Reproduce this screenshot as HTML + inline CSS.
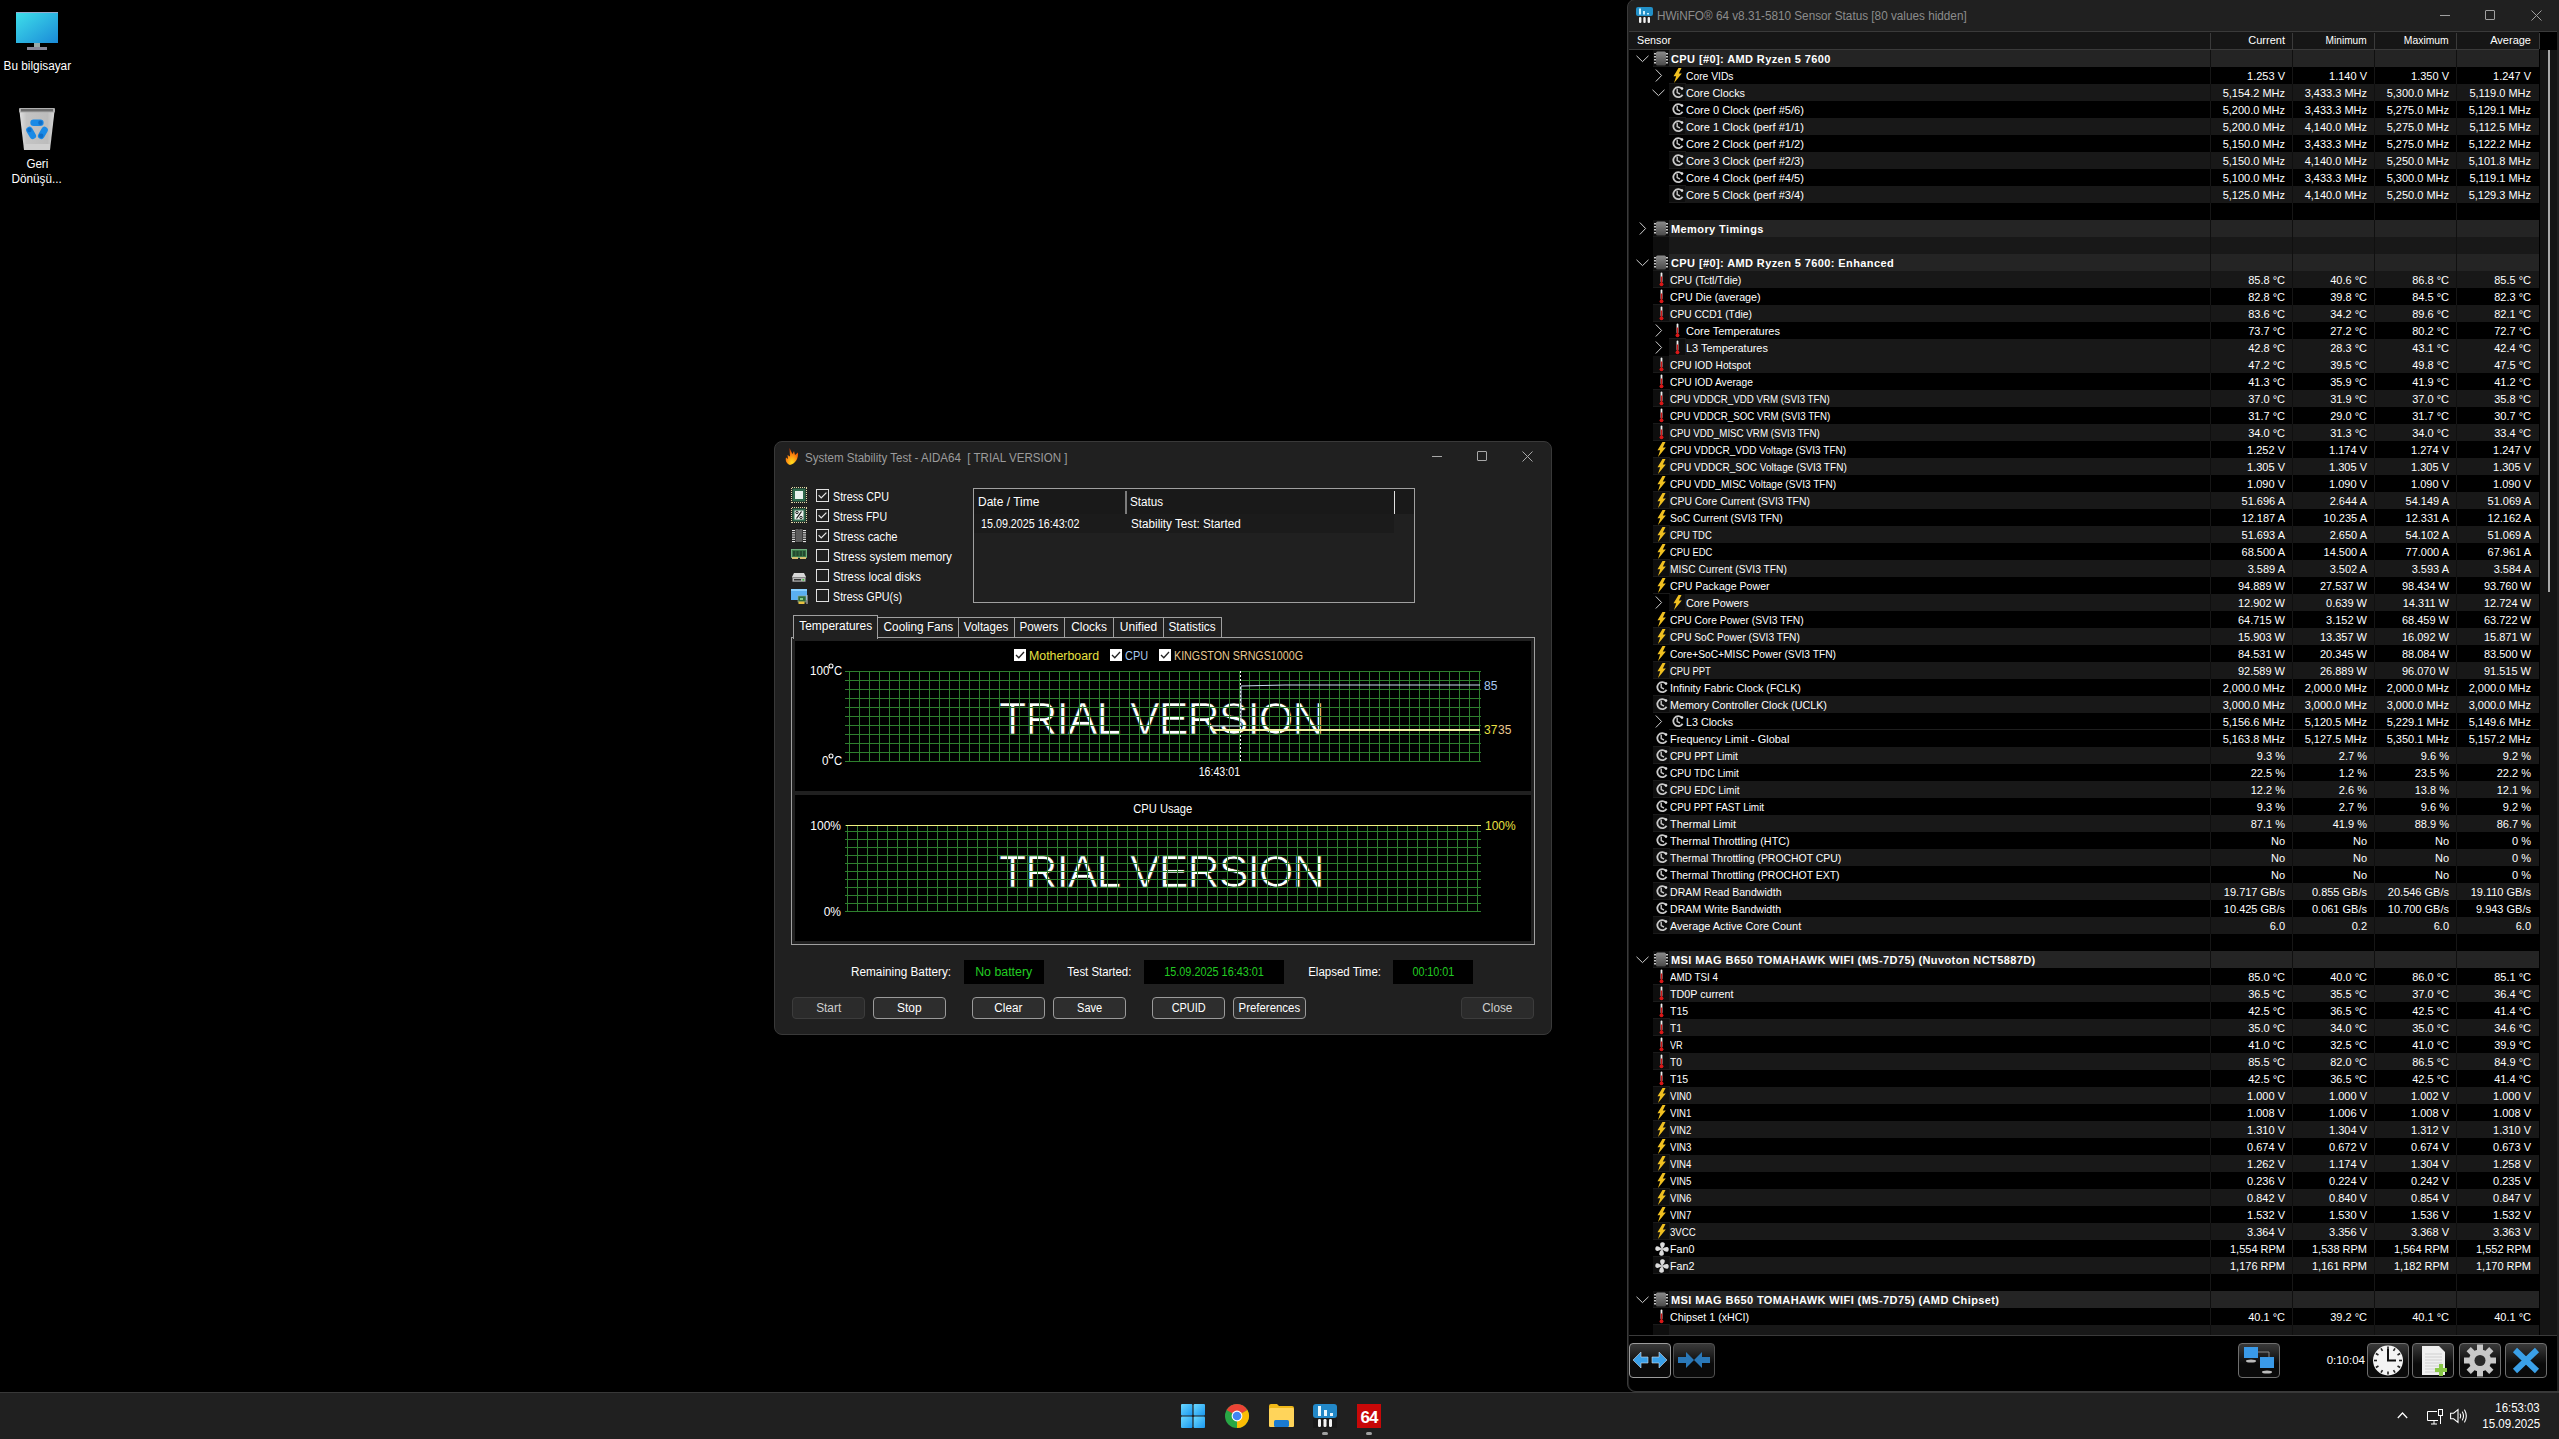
<!DOCTYPE html>
<html><head><meta charset="utf-8"><style>
html,body{margin:0;padding:0;background:#000;width:2559px;height:1439px;overflow:hidden;}
body{position:relative;font-family:"Liberation Sans", sans-serif;}
.t{position:absolute;white-space:pre;}
.r{position:absolute;}
svg{position:absolute;overflow:visible;}
</style></head><body>
<svg style="position:absolute;left:16px;top:12px;" width="42" height="39" viewBox="0 0 42 39"><defs><linearGradient id="mg" x1="0" y1="0" x2="1" y2="1"><stop offset="0" stop-color="#3fe0ea"/><stop offset="1" stop-color="#1a8ad8"/></linearGradient></defs><rect x="0" y="0" width="42" height="31" fill="url(#mg)"/><rect x="0" y="0" width="42" height="1" fill="#9ac"/><rect x="18" y="31" width="6" height="4" fill="#9aa"/><rect x="11" y="35" width="20" height="3" fill="#889"/></svg>
<div class="t" style="left:-3.0px;width:80px;text-align:center;top:59.84px;font-size:12px;line-height:12px;color:#fff;"><span style="display:inline-block;transform:scaleX(0.982);transform-origin:center">Bu bilgisayar</span></div>
<svg style="position:absolute;left:19px;top:108px;" width="36" height="42" viewBox="0 0 36 42"><defs><linearGradient id="rb" x1="0" y1="0" x2="1" y2="0"><stop offset="0" stop-color="#e0e0e0"/><stop offset="0.2" stop-color="#c4c4c4"/><stop offset="0.8" stop-color="#bcbcbc"/><stop offset="1" stop-color="#d8d8d8"/></linearGradient></defs><path d="M0.5 3.5 L35.5 3.5 L31 42 L5 42 Z" fill="url(#rb)"/><rect x="0" y="0" width="36" height="4.5" rx="1" fill="#b0b0b0"/><rect x="2" y="1" width="32" height="2.5" fill="#6c6c6c"/><rect x="5" y="36" width="26" height="6" fill="#cfcfcf"/><path d="M14.6 14.7 L21.4 14.7" stroke="#1a8ae6" stroke-width="6.5" stroke-linecap="round"/><circle cx="21.4" cy="14.7" r="2.2" fill="#0f6ec8"/><path d="M25.6 22.0 L22.2 27.8" stroke="#1a8ae6" stroke-width="6.5" stroke-linecap="round"/><circle cx="22.2" cy="27.8" r="2.2" fill="#0f6ec8"/><path d="M13.8 27.8 L10.4 22.0" stroke="#1a8ae6" stroke-width="6.5" stroke-linecap="round"/><circle cx="10.4" cy="22.0" r="2.2" fill="#0f6ec8"/></svg>
<div class="t" style="left:-3.0px;width:80px;text-align:center;top:157.84px;font-size:12px;line-height:12px;color:#fff;"><span style="display:inline-block;transform:scaleX(0.966);transform-origin:center">Geri</span></div>
<div class="t" style="left:-3.0px;width:80px;text-align:center;top:172.84px;font-size:12px;line-height:12px;color:#fff;"><span style="display:inline-block;transform:scaleX(0.979);transform-origin:center">Dönüşü...</span></div>
<div class="r" style="left:774px;top:441px;width:778px;height:594px;background:#202020;border:1px solid #393939;box-sizing:border-box;border-radius:8px;"></div>
<svg style="position:absolute;left:785px;top:448px;" width="14" height="17" viewBox="0 0 14 17"><defs><radialGradient id="fl" cx="0.5" cy="0.85" r="0.8"><stop offset="0" stop-color="#ffe020"/><stop offset="0.5" stop-color="#ff9010"/><stop offset="1" stop-color="#e04000"/></radialGradient></defs><path d="M4.5 0 L7.5 6 L9 3 L10 7 L13 4.5 C13.5 10 11 15.5 5 17 C2 16 0 13 1 9.5 L3 11 L2.5 7 L5 8.5 Z" fill="url(#fl)"/></svg>
<div class="t" style="left:805px;top:451.84px;font-size:12px;line-height:12px;color:#9c9c9c;"><span style="display:inline-block;transform:scaleX(0.963);transform-origin:left">System Stability Test - AIDA64&nbsp; [ TRIAL VERSION ]</span></div>
<div class="r" style="left:1432px;top:456px;width:10px;height:1px;background:#a8a8a8;"></div>
<div class="r" style="left:1477px;top:451px;width:10px;height:10px;background:transparent;border:1px solid #a8a8a8;box-sizing:border-box;border-radius:1px;"></div>
<svg style="position:absolute;left:1522px;top:451px;" width="11" height="11" viewBox="0 0 11 11"><path d="M0.5 0.5 L10.5 10.5 M10.5 0.5 L0.5 10.5" stroke="#a8a8a8" stroke-width="1"/></svg>
<div class="r" style="left:816px;top:489px;width:13px;height:13px;border:1px solid #e0e0e0;box-sizing:border-box;"></div>
<svg style="position:absolute;left:818px;top:492px;" width="9" height="7" viewBox="0 0 9 7"><path d="M0.6 3.2 L3.2 5.8 L8.4 0.6" fill="none" stroke="#e8e8e8" stroke-width="1.2"/></svg>
<div class="t" style="left:833px;top:490.84px;font-size:12px;line-height:12px;color:#fff;"><span style="display:inline-block;transform:scaleX(0.893);transform-origin:left">Stress CPU</span></div>
<div class="r" style="left:816px;top:509px;width:13px;height:13px;border:1px solid #e0e0e0;box-sizing:border-box;"></div>
<svg style="position:absolute;left:818px;top:512px;" width="9" height="7" viewBox="0 0 9 7"><path d="M0.6 3.2 L3.2 5.8 L8.4 0.6" fill="none" stroke="#e8e8e8" stroke-width="1.2"/></svg>
<div class="t" style="left:833px;top:510.84px;font-size:12px;line-height:12px;color:#fff;"><span style="display:inline-block;transform:scaleX(0.881);transform-origin:left">Stress FPU</span></div>
<div class="r" style="left:816px;top:529px;width:13px;height:13px;border:1px solid #e0e0e0;box-sizing:border-box;"></div>
<svg style="position:absolute;left:818px;top:532px;" width="9" height="7" viewBox="0 0 9 7"><path d="M0.6 3.2 L3.2 5.8 L8.4 0.6" fill="none" stroke="#e8e8e8" stroke-width="1.2"/></svg>
<div class="t" style="left:833px;top:530.84px;font-size:12px;line-height:12px;color:#fff;"><span style="display:inline-block;transform:scaleX(0.931);transform-origin:left">Stress cache</span></div>
<div class="r" style="left:816px;top:549px;width:13px;height:13px;border:1px solid #e0e0e0;box-sizing:border-box;"></div>
<div class="t" style="left:833px;top:550.84px;font-size:12px;line-height:12px;color:#fff;"><span style="display:inline-block;transform:scaleX(0.975);transform-origin:left">Stress system memory</span></div>
<div class="r" style="left:816px;top:569px;width:13px;height:13px;border:1px solid #e0e0e0;box-sizing:border-box;"></div>
<div class="t" style="left:833px;top:570.84px;font-size:12px;line-height:12px;color:#fff;"><span style="display:inline-block;transform:scaleX(0.949);transform-origin:left">Stress local disks</span></div>
<div class="r" style="left:816px;top:589px;width:13px;height:13px;border:1px solid #e0e0e0;box-sizing:border-box;"></div>
<div class="t" style="left:833px;top:590.84px;font-size:12px;line-height:12px;color:#fff;"><span style="display:inline-block;transform:scaleX(0.893);transform-origin:left">Stress GPU(s)</span></div>
<svg style="position:absolute;left:791px;top:487px;" width="16" height="16" viewBox="0 0 16 16"><rect x="1.5" y="1.5" width="13" height="13" fill="#2f6a4c"/><rect x="1" y="0" width="1" height="1" fill="#e0d8a8"/><rect x="1" y="15" width="1" height="1" fill="#e0d8a8"/><rect x="0" y="1" width="1" height="1" fill="#e0d8a8"/><rect x="15" y="1" width="1" height="1" fill="#e0d8a8"/><rect x="3" y="0" width="1" height="1" fill="#e0d8a8"/><rect x="3" y="15" width="1" height="1" fill="#e0d8a8"/><rect x="0" y="3" width="1" height="1" fill="#e0d8a8"/><rect x="15" y="3" width="1" height="1" fill="#e0d8a8"/><rect x="5" y="0" width="1" height="1" fill="#e0d8a8"/><rect x="5" y="15" width="1" height="1" fill="#e0d8a8"/><rect x="0" y="5" width="1" height="1" fill="#e0d8a8"/><rect x="15" y="5" width="1" height="1" fill="#e0d8a8"/><rect x="7" y="0" width="1" height="1" fill="#e0d8a8"/><rect x="7" y="15" width="1" height="1" fill="#e0d8a8"/><rect x="0" y="7" width="1" height="1" fill="#e0d8a8"/><rect x="15" y="7" width="1" height="1" fill="#e0d8a8"/><rect x="9" y="0" width="1" height="1" fill="#e0d8a8"/><rect x="9" y="15" width="1" height="1" fill="#e0d8a8"/><rect x="0" y="9" width="1" height="1" fill="#e0d8a8"/><rect x="15" y="9" width="1" height="1" fill="#e0d8a8"/><rect x="11" y="0" width="1" height="1" fill="#e0d8a8"/><rect x="11" y="15" width="1" height="1" fill="#e0d8a8"/><rect x="0" y="11" width="1" height="1" fill="#e0d8a8"/><rect x="15" y="11" width="1" height="1" fill="#e0d8a8"/><rect x="13" y="0" width="1" height="1" fill="#e0d8a8"/><rect x="13" y="15" width="1" height="1" fill="#e0d8a8"/><rect x="0" y="13" width="1" height="1" fill="#e0d8a8"/><rect x="15" y="13" width="1" height="1" fill="#e0d8a8"/><rect x="15" y="0" width="1" height="1" fill="#e0d8a8"/><rect x="15" y="15" width="1" height="1" fill="#e0d8a8"/><rect x="0" y="15" width="1" height="1" fill="#e0d8a8"/><rect x="15" y="15" width="1" height="1" fill="#e0d8a8"/><rect x="4" y="4" width="8" height="8" fill="#e8f2ee"/></svg>
<svg style="position:absolute;left:791px;top:507px;" width="16" height="16" viewBox="0 0 16 16"><rect x="1.5" y="1.5" width="13" height="13" fill="#2f6a4c"/><rect x="1" y="0" width="1" height="1" fill="#e0d8a8"/><rect x="1" y="15" width="1" height="1" fill="#e0d8a8"/><rect x="0" y="1" width="1" height="1" fill="#e0d8a8"/><rect x="15" y="1" width="1" height="1" fill="#e0d8a8"/><rect x="3" y="0" width="1" height="1" fill="#e0d8a8"/><rect x="3" y="15" width="1" height="1" fill="#e0d8a8"/><rect x="0" y="3" width="1" height="1" fill="#e0d8a8"/><rect x="15" y="3" width="1" height="1" fill="#e0d8a8"/><rect x="5" y="0" width="1" height="1" fill="#e0d8a8"/><rect x="5" y="15" width="1" height="1" fill="#e0d8a8"/><rect x="0" y="5" width="1" height="1" fill="#e0d8a8"/><rect x="15" y="5" width="1" height="1" fill="#e0d8a8"/><rect x="7" y="0" width="1" height="1" fill="#e0d8a8"/><rect x="7" y="15" width="1" height="1" fill="#e0d8a8"/><rect x="0" y="7" width="1" height="1" fill="#e0d8a8"/><rect x="15" y="7" width="1" height="1" fill="#e0d8a8"/><rect x="9" y="0" width="1" height="1" fill="#e0d8a8"/><rect x="9" y="15" width="1" height="1" fill="#e0d8a8"/><rect x="0" y="9" width="1" height="1" fill="#e0d8a8"/><rect x="15" y="9" width="1" height="1" fill="#e0d8a8"/><rect x="11" y="0" width="1" height="1" fill="#e0d8a8"/><rect x="11" y="15" width="1" height="1" fill="#e0d8a8"/><rect x="0" y="11" width="1" height="1" fill="#e0d8a8"/><rect x="15" y="11" width="1" height="1" fill="#e0d8a8"/><rect x="13" y="0" width="1" height="1" fill="#e0d8a8"/><rect x="13" y="15" width="1" height="1" fill="#e0d8a8"/><rect x="0" y="13" width="1" height="1" fill="#e0d8a8"/><rect x="15" y="13" width="1" height="1" fill="#e0d8a8"/><rect x="15" y="0" width="1" height="1" fill="#e0d8a8"/><rect x="15" y="15" width="1" height="1" fill="#e0d8a8"/><rect x="0" y="15" width="1" height="1" fill="#e0d8a8"/><rect x="15" y="15" width="1" height="1" fill="#e0d8a8"/><rect x="3.5" y="3.5" width="9" height="9" fill="#ecf0ee"/><path d="M10.5 4.5 L5.5 11.5" stroke="#111" stroke-width="1.2"/><circle cx="6" cy="5.5" r="1.2" fill="none" stroke="#111" stroke-width="0.9"/><circle cx="10" cy="10.5" r="1.2" fill="none" stroke="#111" stroke-width="0.9"/></svg>
<svg style="position:absolute;left:792px;top:528px;" width="14" height="15" viewBox="0 0 14 15"><path d="M3 0.5 H6 Q7 2 8 0.5 H11 V14.5 H3 Z" fill="#5c5c5c" stroke="#111" stroke-width="0.8"/><rect x="0" y="2.0" width="3" height="1.1" fill="#e8e8e8"/><rect x="11" y="2.0" width="3" height="1.1" fill="#e8e8e8"/><rect x="0" y="4.2" width="3" height="1.1" fill="#e8e8e8"/><rect x="11" y="4.2" width="3" height="1.1" fill="#e8e8e8"/><rect x="0" y="6.4" width="3" height="1.1" fill="#e8e8e8"/><rect x="11" y="6.4" width="3" height="1.1" fill="#e8e8e8"/><rect x="0" y="8.600000000000001" width="3" height="1.1" fill="#e8e8e8"/><rect x="11" y="8.600000000000001" width="3" height="1.1" fill="#e8e8e8"/><rect x="0" y="10.8" width="3" height="1.1" fill="#e8e8e8"/><rect x="11" y="10.8" width="3" height="1.1" fill="#e8e8e8"/><rect x="0" y="13.0" width="3" height="1.1" fill="#e8e8e8"/><rect x="11" y="13.0" width="3" height="1.1" fill="#e8e8e8"/></svg>
<svg style="position:absolute;left:791px;top:549px;" width="16" height="11" viewBox="0 0 16 11"><rect x="0" y="0" width="16" height="9" fill="#3d7a4a"/><rect x="0.5" y="0.5" width="15" height="8" fill="none" stroke="#7ab88a" stroke-width="0.8"/><rect x="2.0" y="2" width="2.4" height="5" fill="#244a30"/><rect x="5.3" y="2" width="2.4" height="5" fill="#244a30"/><rect x="8.6" y="2" width="2.4" height="5" fill="#244a30"/><rect x="11.899999999999999" y="2" width="2.4" height="5" fill="#244a30"/><rect x="1" y="8" width="6" height="2" fill="#d8c070"/><rect x="9" y="8" width="6" height="2" fill="#d8c070"/></svg>
<svg style="position:absolute;left:792px;top:573px;" width="14" height="9" viewBox="0 0 14 9"><path d="M2 0 H12 L14 4 V9 H0 V4 Z" fill="#d8d8d8"/><rect x="0" y="4.5" width="14" height="4.5" fill="#3a3a3a"/><rect x="0.6" y="5" width="12.8" height="3.6" fill="#b8b8b8"/><rect x="2" y="6" width="7" height="1.5" fill="#333"/><rect x="10.5" y="6" width="1.6" height="1.6" fill="#3c3"/></svg>
<svg style="position:absolute;left:791px;top:589px;" width="17" height="15" viewBox="0 0 17 15"><rect x="0" y="0" width="16" height="11" fill="#5ab0f0"/><rect x="0" y="0" width="16" height="2" fill="#8ad0ff"/><rect x="7" y="7" width="8" height="6" fill="#2d6e3e" stroke="#9a9" stroke-width="0.6"/><rect x="9" y="9" width="3" height="2" fill="#8c8"/><rect x="7.5" y="12.5" width="6" height="2.5" fill="#e8c040"/><rect x="15.5" y="6" width="1" height="9" fill="#ccc"/></svg>
<div class="r" style="left:973px;top:488px;width:442px;height:115px;border:1px solid #a0a0a0;box-sizing:border-box;background:#202020;"></div>
<div class="r" style="left:974px;top:489px;width:420px;height:25px;background:#191919;"></div>
<div class="r" style="left:1394px;top:489px;width:20px;height:25px;background:#191919;"></div>
<div class="r" style="left:1125px;top:491px;width:2px;height:23px;background:#7c7c7c;"></div>
<div class="r" style="left:1394px;top:491px;width:1px;height:23px;background:#e0e0e0;"></div>
<div class="t" style="left:978px;top:495.84px;font-size:12px;line-height:12px;color:#fff;">Date / Time</div>
<div class="t" style="left:1130px;top:495.84px;font-size:12px;line-height:12px;color:#fff;"><span style="display:inline-block;transform:scaleX(0.97);transform-origin:left">Status</span></div>
<div class="r" style="left:974px;top:514px;width:420px;height:19px;background:#1b1b1b;"></div>
<div class="t" style="left:981px;top:517.84px;font-size:12px;line-height:12px;color:#fff;"><span style="display:inline-block;transform:scaleX(0.895);transform-origin:left">15.09.2025 16:43:02</span></div>
<div class="t" style="left:1131px;top:517.84px;font-size:12px;line-height:12px;color:#fff;"><span style="display:inline-block;transform:scaleX(0.975);transform-origin:left">Stability Test: Started</span></div>
<div class="r" style="left:877px;top:617px;width:82px;height:21px;border:1px solid #a0a0a0;box-sizing:border-box;background:#202020;"></div>
<div class="t" style="left:858.0px;width:120px;text-align:center;top:620.84px;font-size:12px;line-height:12px;color:#fff;"><span style="display:inline-block;transform:scaleX(0.983);transform-origin:center">Cooling Fans</span></div>
<div class="r" style="left:958px;top:617px;width:57px;height:21px;border:1px solid #a0a0a0;box-sizing:border-box;background:#202020;"></div>
<div class="t" style="left:926.5px;width:120px;text-align:center;top:620.84px;font-size:12px;line-height:12px;color:#fff;"><span style="display:inline-block;transform:scaleX(0.965);transform-origin:center">Voltages</span></div>
<div class="r" style="left:1014px;top:617px;width:51px;height:21px;border:1px solid #a0a0a0;box-sizing:border-box;background:#202020;"></div>
<div class="t" style="left:979.5px;width:120px;text-align:center;top:620.84px;font-size:12px;line-height:12px;color:#fff;"><span style="display:inline-block;transform:scaleX(0.97);transform-origin:center">Powers</span></div>
<div class="r" style="left:1064px;top:617px;width:50px;height:21px;border:1px solid #a0a0a0;box-sizing:border-box;background:#202020;"></div>
<div class="t" style="left:1029.0px;width:120px;text-align:center;top:620.84px;font-size:12px;line-height:12px;color:#fff;"><span style="display:inline-block;transform:scaleX(0.99);transform-origin:center">Clocks</span></div>
<div class="r" style="left:1113px;top:617px;width:51px;height:21px;border:1px solid #a0a0a0;box-sizing:border-box;background:#202020;"></div>
<div class="t" style="left:1078.5px;width:120px;text-align:center;top:620.84px;font-size:12px;line-height:12px;color:#fff;">Unified</div>
<div class="r" style="left:1163px;top:617px;width:59px;height:21px;border:1px solid #a0a0a0;box-sizing:border-box;background:#202020;"></div>
<div class="t" style="left:1132.5px;width:120px;text-align:center;top:620.84px;font-size:12px;line-height:12px;color:#fff;"><span style="display:inline-block;transform:scaleX(0.98);transform-origin:center">Statistics</span></div>
<div class="r" style="left:791px;top:637px;width:744px;height:308px;border:1px solid #a0a0a0;box-sizing:border-box;background:#202020;"></div>
<div class="r" style="left:793px;top:615px;width:85px;height:24px;border:1px solid #a0a0a0;border-bottom:none;box-sizing:border-box;background:#202020;"></div>
<div class="t" style="left:775.5px;width:120px;text-align:center;top:619.84px;font-size:12px;line-height:12px;color:#fff;"><span style="display:inline-block;transform:scaleX(0.995);transform-origin:center">Temperatures</span></div>
<div class="r" style="left:795px;top:641px;width:736px;height:150px;background:#000;"></div>
<div class="r" style="left:795px;top:795px;width:736px;height:146px;background:#000;"></div>
<div class="t" style="left:999px;top:695.91px;font-size:45px;line-height:45px;color:#fff;letter-spacing:-1.0px;-webkit-text-stroke:0.7px #000;transform:scaleX(0.99);transform-origin:0 0;">TRIAL VERSION</div>
<div class="t" style="left:999px;top:848.91px;font-size:45px;line-height:45px;color:#fff;letter-spacing:-1.0px;-webkit-text-stroke:0.7px #000;transform:scaleX(0.99);transform-origin:0 0;">TRIAL VERSION</div>
<svg style="position:absolute;left:0;top:0" width="2559" height="1439"><g fill="#2e7f2e"><rect x="845" y="671" width="636" height="1"/><rect x="845" y="680" width="636" height="1"/><rect x="845" y="689" width="636" height="1"/><rect x="845" y="698" width="636" height="1"/><rect x="845" y="707" width="636" height="1"/><rect x="845" y="716" width="636" height="1"/><rect x="845" y="725" width="636" height="1"/><rect x="845" y="734" width="636" height="1"/><rect x="845" y="743" width="636" height="1"/><rect x="845" y="752" width="636" height="1"/><rect x="845" y="761" width="636" height="1"/><rect x="849" y="671" width="1" height="91"/><rect x="859" y="671" width="1" height="91"/><rect x="869" y="671" width="1" height="91"/><rect x="879" y="671" width="1" height="91"/><rect x="889" y="671" width="1" height="91"/><rect x="899" y="671" width="1" height="91"/><rect x="909" y="671" width="1" height="91"/><rect x="919" y="671" width="1" height="91"/><rect x="929" y="671" width="1" height="91"/><rect x="939" y="671" width="1" height="91"/><rect x="949" y="671" width="1" height="91"/><rect x="959" y="671" width="1" height="91"/><rect x="969" y="671" width="1" height="91"/><rect x="979" y="671" width="1" height="91"/><rect x="989" y="671" width="1" height="91"/><rect x="999" y="671" width="1" height="91"/><rect x="1009" y="671" width="1" height="91"/><rect x="1019" y="671" width="1" height="91"/><rect x="1029" y="671" width="1" height="91"/><rect x="1039" y="671" width="1" height="91"/><rect x="1049" y="671" width="1" height="91"/><rect x="1059" y="671" width="1" height="91"/><rect x="1069" y="671" width="1" height="91"/><rect x="1079" y="671" width="1" height="91"/><rect x="1089" y="671" width="1" height="91"/><rect x="1099" y="671" width="1" height="91"/><rect x="1109" y="671" width="1" height="91"/><rect x="1119" y="671" width="1" height="91"/><rect x="1129" y="671" width="1" height="91"/><rect x="1139" y="671" width="1" height="91"/><rect x="1149" y="671" width="1" height="91"/><rect x="1159" y="671" width="1" height="91"/><rect x="1169" y="671" width="1" height="91"/><rect x="1179" y="671" width="1" height="91"/><rect x="1189" y="671" width="1" height="91"/><rect x="1199" y="671" width="1" height="91"/><rect x="1209" y="671" width="1" height="91"/><rect x="1219" y="671" width="1" height="91"/><rect x="1229" y="671" width="1" height="91"/><rect x="1239" y="671" width="1" height="91"/><rect x="1249" y="671" width="1" height="91"/><rect x="1259" y="671" width="1" height="91"/><rect x="1269" y="671" width="1" height="91"/><rect x="1279" y="671" width="1" height="91"/><rect x="1289" y="671" width="1" height="91"/><rect x="1299" y="671" width="1" height="91"/><rect x="1309" y="671" width="1" height="91"/><rect x="1319" y="671" width="1" height="91"/><rect x="1329" y="671" width="1" height="91"/><rect x="1339" y="671" width="1" height="91"/><rect x="1349" y="671" width="1" height="91"/><rect x="1359" y="671" width="1" height="91"/><rect x="1369" y="671" width="1" height="91"/><rect x="1379" y="671" width="1" height="91"/><rect x="1389" y="671" width="1" height="91"/><rect x="1399" y="671" width="1" height="91"/><rect x="1409" y="671" width="1" height="91"/><rect x="1419" y="671" width="1" height="91"/><rect x="1429" y="671" width="1" height="91"/><rect x="1439" y="671" width="1" height="91"/><rect x="1449" y="671" width="1" height="91"/><rect x="1459" y="671" width="1" height="91"/><rect x="1469" y="671" width="1" height="91"/><rect x="1479" y="671" width="1" height="91"/></g></svg>
<svg style="position:absolute;left:0;top:0" width="2559" height="1439"><g fill="#2e7f2e"><rect x="845" y="825" width="636" height="1"/><rect x="845" y="831" width="636" height="1"/><rect x="845" y="839" width="636" height="1"/><rect x="845" y="847" width="636" height="1"/><rect x="845" y="855" width="636" height="1"/><rect x="845" y="863" width="636" height="1"/><rect x="845" y="871" width="636" height="1"/><rect x="845" y="879" width="636" height="1"/><rect x="845" y="887" width="636" height="1"/><rect x="845" y="895" width="636" height="1"/><rect x="845" y="903" width="636" height="1"/><rect x="845" y="911" width="636" height="1"/><rect x="847" y="825" width="1" height="87"/><rect x="857" y="825" width="1" height="87"/><rect x="867" y="825" width="1" height="87"/><rect x="877" y="825" width="1" height="87"/><rect x="887" y="825" width="1" height="87"/><rect x="897" y="825" width="1" height="87"/><rect x="907" y="825" width="1" height="87"/><rect x="917" y="825" width="1" height="87"/><rect x="927" y="825" width="1" height="87"/><rect x="937" y="825" width="1" height="87"/><rect x="947" y="825" width="1" height="87"/><rect x="957" y="825" width="1" height="87"/><rect x="967" y="825" width="1" height="87"/><rect x="977" y="825" width="1" height="87"/><rect x="987" y="825" width="1" height="87"/><rect x="997" y="825" width="1" height="87"/><rect x="1007" y="825" width="1" height="87"/><rect x="1017" y="825" width="1" height="87"/><rect x="1027" y="825" width="1" height="87"/><rect x="1037" y="825" width="1" height="87"/><rect x="1047" y="825" width="1" height="87"/><rect x="1057" y="825" width="1" height="87"/><rect x="1067" y="825" width="1" height="87"/><rect x="1077" y="825" width="1" height="87"/><rect x="1087" y="825" width="1" height="87"/><rect x="1097" y="825" width="1" height="87"/><rect x="1107" y="825" width="1" height="87"/><rect x="1117" y="825" width="1" height="87"/><rect x="1127" y="825" width="1" height="87"/><rect x="1137" y="825" width="1" height="87"/><rect x="1147" y="825" width="1" height="87"/><rect x="1157" y="825" width="1" height="87"/><rect x="1167" y="825" width="1" height="87"/><rect x="1177" y="825" width="1" height="87"/><rect x="1187" y="825" width="1" height="87"/><rect x="1197" y="825" width="1" height="87"/><rect x="1207" y="825" width="1" height="87"/><rect x="1217" y="825" width="1" height="87"/><rect x="1227" y="825" width="1" height="87"/><rect x="1237" y="825" width="1" height="87"/><rect x="1247" y="825" width="1" height="87"/><rect x="1257" y="825" width="1" height="87"/><rect x="1267" y="825" width="1" height="87"/><rect x="1277" y="825" width="1" height="87"/><rect x="1287" y="825" width="1" height="87"/><rect x="1297" y="825" width="1" height="87"/><rect x="1307" y="825" width="1" height="87"/><rect x="1317" y="825" width="1" height="87"/><rect x="1327" y="825" width="1" height="87"/><rect x="1337" y="825" width="1" height="87"/><rect x="1347" y="825" width="1" height="87"/><rect x="1357" y="825" width="1" height="87"/><rect x="1367" y="825" width="1" height="87"/><rect x="1377" y="825" width="1" height="87"/><rect x="1387" y="825" width="1" height="87"/><rect x="1397" y="825" width="1" height="87"/><rect x="1407" y="825" width="1" height="87"/><rect x="1417" y="825" width="1" height="87"/><rect x="1427" y="825" width="1" height="87"/><rect x="1437" y="825" width="1" height="87"/><rect x="1447" y="825" width="1" height="87"/><rect x="1457" y="825" width="1" height="87"/><rect x="1467" y="825" width="1" height="87"/><rect x="1477" y="825" width="1" height="87"/></g></svg>
<div class="r" style="left:1014px;top:649px;width:12px;height:12px;background:#fff;"></div>
<svg style="position:absolute;left:1015px;top:651px;" width="10" height="8" viewBox="0 0 10 8"><path d="M1 4 L3.8 6.8 L9 1" fill="none" stroke="#222" stroke-width="1.3"/></svg>
<div class="t" style="left:1029px;top:649.84px;font-size:12px;line-height:12px;color:#e8e040;"><span style="display:inline-block;transform:scaleX(1.03);transform-origin:left">Motherboard</span></div>
<div class="r" style="left:1110px;top:649px;width:12px;height:12px;background:#fff;"></div>
<svg style="position:absolute;left:1111px;top:651px;" width="10" height="8" viewBox="0 0 10 8"><path d="M1 4 L3.8 6.8 L9 1" fill="none" stroke="#222" stroke-width="1.3"/></svg>
<div class="t" style="left:1125px;top:649.84px;font-size:12px;line-height:12px;color:#a8c8f0;"><span style="display:inline-block;transform:scaleX(0.91);transform-origin:left">CPU</span></div>
<div class="r" style="left:1159px;top:649px;width:12px;height:12px;background:#fff;"></div>
<svg style="position:absolute;left:1160px;top:651px;" width="10" height="8" viewBox="0 0 10 8"><path d="M1 4 L3.8 6.8 L9 1" fill="none" stroke="#222" stroke-width="1.3"/></svg>
<div class="t" style="left:1174px;top:649.84px;font-size:12px;line-height:12px;color:#e8c890;"><span style="display:inline-block;transform:scaleX(0.893);transform-origin:left">KINGSTON SRNGS1000G</span></div>
<div class="t" style="left:810px;top:665.42px;font-size:12.5px;line-height:12.5px;color:#fff;"><span style="display:inline-block;transform:scaleX(0.93);transform-origin:left">100</span></div>
<svg style="position:absolute;left:828px;top:663px;" width="6" height="6" viewBox="0 0 6 6"><circle cx="3" cy="3" r="2" fill="none" stroke="#fff" stroke-width="1.1"/></svg>
<div class="t" style="left:833.5px;top:665.42px;font-size:12.5px;line-height:12.5px;color:#fff;"><span style="display:inline-block;transform:scaleX(0.9);transform-origin:left">C</span></div>
<div class="t" style="left:821.5px;top:755.42px;font-size:12.5px;line-height:12.5px;color:#fff;"><span style="display:inline-block;transform:scaleX(0.93);transform-origin:left">0</span></div>
<svg style="position:absolute;left:828px;top:753px;" width="6" height="6" viewBox="0 0 6 6"><circle cx="3" cy="3" r="2" fill="none" stroke="#fff" stroke-width="1.1"/></svg>
<div class="t" style="left:833.5px;top:755.42px;font-size:12.5px;line-height:12.5px;color:#fff;"><span style="display:inline-block;transform:scaleX(0.9);transform-origin:left">C</span></div>
<div class="t" style="left:1179.0px;width:80px;text-align:center;top:765.84px;font-size:12px;line-height:12px;color:#fff;"><span style="display:inline-block;transform:scaleX(0.886);transform-origin:center">16:43:01</span></div>
<svg style="position:absolute;left:1205px;top:671px;" width="280" height="92" viewBox="0 0 280 92"><path d="M35.5 0 V90" stroke="#fff" stroke-width="1" stroke-dasharray="2 2"/><path d="M7 55 L36 55 L36 15 L80 14 L275 14" fill="none" stroke="#c8d8f0" stroke-width="1"/><path d="M7 59 L275 59" fill="none" stroke="#f0f0a0" stroke-width="2"/></svg>
<div class="t" style="left:1484px;top:679.84px;font-size:12px;line-height:12px;color:#a8c8f0;">85</div>
<div class="t" style="left:1484px;top:723.84px;font-size:12px;line-height:12px;color:#e8e040;">37</div>
<div class="t" style="left:1498px;top:723.84px;font-size:12px;line-height:12px;color:#e8c890;">35</div>
<div class="t" style="left:1113.0px;width:100px;text-align:center;top:802.84px;font-size:12px;line-height:12px;color:#fff;"><span style="display:inline-block;transform:scaleX(0.93);transform-origin:center">CPU Usage</span></div>
<div class="r" style="left:846px;top:825px;width:635px;height:1px;background:#f0f080;"></div>
<div class="t" style="left:781px;width:60px;text-align:right;top:819.84px;font-size:12px;line-height:12px;color:#fff;">100%</div>
<div class="t" style="left:781px;width:60px;text-align:right;top:905.84px;font-size:12px;line-height:12px;color:#fff;">0%</div>
<div class="t" style="left:1485px;top:819.84px;font-size:12px;line-height:12px;color:#e8e040;">100%</div>
<div class="t" style="left:801px;width:150px;text-align:right;top:965.84px;font-size:12px;line-height:12px;color:#fff;"><span style="display:inline-block;transform:scaleX(0.98);transform-origin:right">Remaining Battery:</span></div>
<div class="r" style="left:964px;top:960px;width:80px;height:24px;background:#000;"></div>
<div class="t" style="left:964.0px;width:80px;text-align:center;top:965.84px;font-size:12px;line-height:12px;color:#22cc22;"><span style="display:inline-block;transform:scaleX(1.03);transform-origin:center">No battery</span></div>
<div class="t" style="left:1031px;width:100px;text-align:right;top:965.84px;font-size:12px;line-height:12px;color:#fff;"><span style="display:inline-block;transform:scaleX(0.95);transform-origin:right">Test Started:</span></div>
<div class="r" style="left:1144px;top:960px;width:140px;height:24px;background:#000;"></div>
<div class="t" style="left:1144.0px;width:140px;text-align:center;top:965.84px;font-size:12px;line-height:12px;color:#22cc22;"><span style="display:inline-block;transform:scaleX(0.905);transform-origin:center">15.09.2025 16:43:01</span></div>
<div class="t" style="left:1281px;width:100px;text-align:right;top:965.84px;font-size:12px;line-height:12px;color:#fff;"><span style="display:inline-block;transform:scaleX(0.958);transform-origin:right">Elapsed Time:</span></div>
<div class="r" style="left:1393px;top:960px;width:80px;height:24px;background:#000;"></div>
<div class="t" style="left:1393.0px;width:80px;text-align:center;top:965.84px;font-size:12px;line-height:12px;color:#22cc22;"><span style="display:inline-block;transform:scaleX(0.897);transform-origin:center">00:10:01</span></div>
<div class="r" style="left:792px;top:997px;width:73px;height:21.5px;border:1px solid #3c3c3c;box-sizing:border-box;border-radius:4px;background:#2b2b2b;"></div>
<div class="t" style="left:783.5px;width:90px;text-align:center;top:1001.84px;font-size:12px;line-height:12px;color:#cfcfcf;"><span style="display:inline-block;transform:scaleX(0.99);transform-origin:center">Start</span></div>
<div class="r" style="left:873px;top:997px;width:73px;height:21.5px;border:1px solid #9a9a9a;box-sizing:border-box;border-radius:4px;background:#2d2d2d;"></div>
<div class="t" style="left:864.5px;width:90px;text-align:center;top:1001.84px;font-size:12px;line-height:12px;color:#ffffff;"><span style="display:inline-block;transform:scaleX(0.996);transform-origin:center">Stop</span></div>
<div class="r" style="left:972px;top:997px;width:73px;height:21.5px;border:1px solid #9a9a9a;box-sizing:border-box;border-radius:4px;background:#2d2d2d;"></div>
<div class="t" style="left:963.5px;width:90px;text-align:center;top:1001.84px;font-size:12px;line-height:12px;color:#ffffff;"><span style="display:inline-block;transform:scaleX(0.975);transform-origin:center">Clear</span></div>
<div class="r" style="left:1053px;top:997px;width:73px;height:21.5px;border:1px solid #9a9a9a;box-sizing:border-box;border-radius:4px;background:#2d2d2d;"></div>
<div class="t" style="left:1044.5px;width:90px;text-align:center;top:1001.84px;font-size:12px;line-height:12px;color:#ffffff;"><span style="display:inline-block;transform:scaleX(0.92);transform-origin:center">Save</span></div>
<div class="r" style="left:1152px;top:997px;width:73px;height:21.5px;border:1px solid #9a9a9a;box-sizing:border-box;border-radius:4px;background:#2d2d2d;"></div>
<div class="t" style="left:1143.5px;width:90px;text-align:center;top:1001.84px;font-size:12px;line-height:12px;color:#ffffff;"><span style="display:inline-block;transform:scaleX(0.91);transform-origin:center">CPUID</span></div>
<div class="r" style="left:1233px;top:997px;width:73px;height:21.5px;border:1px solid #9a9a9a;box-sizing:border-box;border-radius:4px;background:#2d2d2d;"></div>
<div class="t" style="left:1224.5px;width:90px;text-align:center;top:1001.84px;font-size:12px;line-height:12px;color:#ffffff;"><span style="display:inline-block;transform:scaleX(0.95);transform-origin:center">Preferences</span></div>
<div class="r" style="left:1461px;top:997px;width:73px;height:21.5px;border:1px solid #3c3c3c;box-sizing:border-box;border-radius:4px;background:#2b2b2b;"></div>
<div class="t" style="left:1452.5px;width:90px;text-align:center;top:1001.84px;font-size:12px;line-height:12px;color:#cfcfcf;"><span style="display:inline-block;transform:scaleX(0.98);transform-origin:center">Close</span></div>
<div class="r" style="left:1627px;top:-1px;width:940px;height:1393px;background:#202020;border:1px solid #3a3a3a;box-sizing:border-box;border-radius:8px;"></div>
<svg style="position:absolute;left:1636px;top:7px;" width="17" height="16" viewBox="0 0 17 16"><rect x="0" y="0" width="17" height="9" rx="2" fill="#2290c8"/><rect x="3" y="1.5" width="2" height="6" fill="#c8f0ff"/><rect x="7" y="4" width="2" height="3.5" fill="#c8f0ff"/><rect x="11" y="6" width="2" height="1.5" fill="#c8f0ff"/><rect x="3" y="10" width="2.4" height="6" rx="1" fill="#f0f0f0"/><rect x="7.3" y="10" width="2.4" height="6" rx="1" fill="#f0f0f0"/><rect x="11.6" y="10" width="2.4" height="6" rx="1" fill="#f0f0f0"/></svg>
<div class="t" style="left:1657px;top:9.84px;font-size:12px;line-height:12px;color:#8c8c8c;"><span style="display:inline-block;transform:scaleX(0.979);transform-origin:left">HWiNFO® 64 v8.31-5810 Sensor Status [80 values hidden]</span></div>
<div class="r" style="left:2440px;top:15px;width:10px;height:1px;background:#a0a0a0;"></div>
<div class="r" style="left:2485px;top:10px;width:10px;height:10px;background:transparent;border:1px solid #a0a0a0;box-sizing:border-box;border-radius:1px;"></div>
<svg style="position:absolute;left:2531px;top:10px;" width="11" height="11" viewBox="0 0 11 11"><path d="M0.5 0.5 L10.5 10.5 M10.5 0.5 L0.5 10.5" stroke="#a0a0a0" stroke-width="1"/></svg>
<div class="r" style="left:1629px;top:31px;width:928px;height:1px;background:#3a3a3a;"></div>
<div class="r" style="left:1629px;top:32px;width:928px;height:1303px;background:#000;"></div>
<div class="r" style="left:1629px;top:32px;width:910px;height:17px;background:#161616;"></div>
<div class="r" style="left:1629px;top:49px;width:910px;height:1px;background:#3a3a3a;"></div>
<div class="r" style="left:2210px;top:33px;width:1px;height:16px;background:#3a3a3a;"></div>
<div class="r" style="left:2292px;top:33px;width:1px;height:16px;background:#3a3a3a;"></div>
<div class="r" style="left:2374px;top:33px;width:1px;height:16px;background:#3a3a3a;"></div>
<div class="r" style="left:2456px;top:33px;width:1px;height:16px;background:#3a3a3a;"></div>
<div class="r" style="left:2539px;top:33px;width:1px;height:16px;background:#3a3a3a;"></div>
<div class="t" style="left:1637px;top:34.69px;font-size:11px;line-height:11px;color:#fff;"><span style="display:inline-block;transform:scaleX(0.975);transform-origin:left">Sensor</span></div>
<div class="t" style="left:2205px;width:80px;text-align:right;top:34.69px;font-size:11px;line-height:11px;color:#fff;">Current</div>
<div class="t" style="left:2287px;width:80px;text-align:right;top:34.69px;font-size:11px;line-height:11px;color:#fff;"><span style="display:inline-block;transform:scaleX(0.92);transform-origin:right">Minimum</span></div>
<div class="t" style="left:2369px;width:80px;text-align:right;top:34.69px;font-size:11px;line-height:11px;color:#fff;"><span style="display:inline-block;transform:scaleX(0.94);transform-origin:right">Maximum</span></div>
<div class="t" style="left:2451px;width:80px;text-align:right;top:34.69px;font-size:11px;line-height:11px;color:#fff;">Average</div>
<div class="r" style="left:2540px;top:50px;width:17px;height:1285px;background:#151515;"></div>
<div class="r" style="left:2548px;top:50px;width:2px;height:542px;background:#a8a8a8;"></div>
<div class="r" style="left:1669px;top:50px;width:870px;height:17px;background:#242424;"></div>
<div class="r" style="left:1653px;top:50px;width:16px;height:17px;background:#0e0e0e;"></div>
<div class="r" style="left:2210px;top:50px;width:1px;height:17px;background:#101010;"></div>
<div class="r" style="left:2292px;top:50px;width:1px;height:17px;background:#101010;"></div>
<div class="r" style="left:2374px;top:50px;width:1px;height:17px;background:#101010;"></div>
<div class="r" style="left:2456px;top:50px;width:1px;height:17px;background:#101010;"></div>
<div class="r" style="left:1653px;top:66px;width:17px;height:1px;background:#1a1a1a;"></div>
<svg style="position:absolute;left:1636px;top:55px;" width="13" height="8" viewBox="0 0 13 8"><path d="M0.5 0.8 L6.5 6.6 L12.5 0.8" fill="none" stroke="#d0d0d0" stroke-width="1"/></svg>
<svg style="position:absolute;left:1654px;top:51px;" width="14" height="15" viewBox="0 0 14 15"><defs><linearGradient id="cg" x1="0" x2="0" y1="0" y2="1"><stop offset="0" stop-color="#8a8a8a"/><stop offset="1" stop-color="#4a4a4a"/></linearGradient></defs><rect x="2" y="0.5" width="10" height="14" rx="1.5" fill="url(#cg)"/><rect x="0" y="2" width="2" height="1.5" fill="#c8c8c8"/><rect x="12" y="2" width="2" height="1.5" fill="#c8c8c8"/><rect x="0" y="5" width="2" height="1.5" fill="#c8c8c8"/><rect x="12" y="5" width="2" height="1.5" fill="#c8c8c8"/><rect x="0" y="8" width="2" height="1.5" fill="#c8c8c8"/><rect x="12" y="8" width="2" height="1.5" fill="#c8c8c8"/><rect x="0" y="11" width="2" height="1.5" fill="#c8c8c8"/><rect x="12" y="11" width="2" height="1.5" fill="#c8c8c8"/></svg>
<div class="t" style="left:1671px;top:53.69px;font-size:11px;line-height:11px;color:#fff;font-weight:700;letter-spacing:0.4px;">CPU [#0]: AMD Ryzen 5 7600</div>
<div class="r" style="left:2210px;top:67px;width:1px;height:17px;background:#161616;"></div>
<div class="r" style="left:2292px;top:67px;width:1px;height:17px;background:#161616;"></div>
<div class="r" style="left:2374px;top:67px;width:1px;height:17px;background:#161616;"></div>
<div class="r" style="left:2456px;top:67px;width:1px;height:17px;background:#161616;"></div>
<div class="r" style="left:1669px;top:83px;width:17px;height:1px;background:#1a1a1a;"></div>
<svg style="position:absolute;left:1655px;top:69px;" width="8" height="13" viewBox="0 0 8 13"><path d="M0.8 0.5 L6.6 6.5 L0.8 12.5" fill="none" stroke="#d0d0d0" stroke-width="1"/></svg>
<svg style="position:absolute;left:1673px;top:68px;" width="9" height="15" viewBox="0 0 9 15"><path d="M5.5 0 L8.5 0 L5.8 5.5 L8.8 5.5 L1 15 L3.2 8.2 L0.5 8.2 Z" fill="#f0c020"/></svg>
<div class="t" style="left:1686px;top:70.69px;font-size:11px;line-height:11px;color:#fff;"><span style="display:inline-block;transform:scaleX(0.936);transform-origin:left">Core VIDs</span></div>
<div class="t" style="left:2205px;width:80px;text-align:right;top:70.69px;font-size:11px;line-height:11px;color:#fff;">1.253 V</div>
<div class="t" style="left:2287px;width:80px;text-align:right;top:70.69px;font-size:11px;line-height:11px;color:#fff;">1.140 V</div>
<div class="t" style="left:2369px;width:80px;text-align:right;top:70.69px;font-size:11px;line-height:11px;color:#fff;">1.350 V</div>
<div class="t" style="left:2451px;width:80px;text-align:right;top:70.69px;font-size:11px;line-height:11px;color:#fff;">1.247 V</div>
<div class="r" style="left:1685px;top:84px;width:854px;height:17px;background:#181818;"></div>
<div class="r" style="left:1669px;top:84px;width:16px;height:17px;background:#0e0e0e;"></div>
<div class="r" style="left:2210px;top:84px;width:1px;height:17px;background:#101010;"></div>
<div class="r" style="left:2292px;top:84px;width:1px;height:17px;background:#101010;"></div>
<div class="r" style="left:2374px;top:84px;width:1px;height:17px;background:#101010;"></div>
<div class="r" style="left:2456px;top:84px;width:1px;height:17px;background:#101010;"></div>
<div class="r" style="left:1669px;top:100px;width:17px;height:1px;background:#1a1a1a;"></div>
<svg style="position:absolute;left:1652px;top:89px;" width="13" height="8" viewBox="0 0 13 8"><path d="M0.5 0.8 L6.5 6.6 L12.5 0.8" fill="none" stroke="#d0d0d0" stroke-width="1"/></svg>
<svg style="position:absolute;left:1672px;top:86px;" width="12" height="12" viewBox="0 0 12 12"><path d="M9.8 2.6 A5 5 0 1 0 10.6 8.8" fill="none" stroke="#c8c8c8" stroke-width="1.8"/><path d="M5.2 2.8 L5.2 6.6 L8 8" fill="none" stroke="#c8c8c8" stroke-width="1.4"/><circle cx="10" cy="2.6" r="1.3" fill="#e0e0e0"/></svg>
<div class="t" style="left:1686px;top:87.69px;font-size:11px;line-height:11px;color:#fff;"><span style="display:inline-block;transform:scaleX(0.985);transform-origin:left">Core Clocks</span></div>
<div class="t" style="left:2205px;width:80px;text-align:right;top:87.69px;font-size:11px;line-height:11px;color:#fff;">5,154.2 MHz</div>
<div class="t" style="left:2287px;width:80px;text-align:right;top:87.69px;font-size:11px;line-height:11px;color:#fff;">3,433.3 MHz</div>
<div class="t" style="left:2369px;width:80px;text-align:right;top:87.69px;font-size:11px;line-height:11px;color:#fff;">5,300.0 MHz</div>
<div class="t" style="left:2451px;width:80px;text-align:right;top:87.69px;font-size:11px;line-height:11px;color:#fff;">5,119.0 MHz</div>
<div class="r" style="left:2210px;top:101px;width:1px;height:17px;background:#161616;"></div>
<div class="r" style="left:2292px;top:101px;width:1px;height:17px;background:#161616;"></div>
<div class="r" style="left:2374px;top:101px;width:1px;height:17px;background:#161616;"></div>
<div class="r" style="left:2456px;top:101px;width:1px;height:17px;background:#161616;"></div>
<div class="r" style="left:1669px;top:117px;width:17px;height:1px;background:#1a1a1a;"></div>
<svg style="position:absolute;left:1672px;top:103px;" width="12" height="12" viewBox="0 0 12 12"><path d="M9.8 2.6 A5 5 0 1 0 10.6 8.8" fill="none" stroke="#c8c8c8" stroke-width="1.8"/><path d="M5.2 2.8 L5.2 6.6 L8 8" fill="none" stroke="#c8c8c8" stroke-width="1.4"/><circle cx="10" cy="2.6" r="1.3" fill="#e0e0e0"/></svg>
<div class="t" style="left:1686px;top:104.69px;font-size:11px;line-height:11px;color:#fff;"><span style="display:inline-block;transform:scaleX(1.004);transform-origin:left">Core 0 Clock (perf #5/6)</span></div>
<div class="t" style="left:2205px;width:80px;text-align:right;top:104.69px;font-size:11px;line-height:11px;color:#fff;">5,200.0 MHz</div>
<div class="t" style="left:2287px;width:80px;text-align:right;top:104.69px;font-size:11px;line-height:11px;color:#fff;">3,433.3 MHz</div>
<div class="t" style="left:2369px;width:80px;text-align:right;top:104.69px;font-size:11px;line-height:11px;color:#fff;">5,275.0 MHz</div>
<div class="t" style="left:2451px;width:80px;text-align:right;top:104.69px;font-size:11px;line-height:11px;color:#fff;">5,129.1 MHz</div>
<div class="r" style="left:1685px;top:118px;width:854px;height:17px;background:#181818;"></div>
<div class="r" style="left:1669px;top:118px;width:16px;height:17px;background:#0e0e0e;"></div>
<div class="r" style="left:2210px;top:118px;width:1px;height:17px;background:#101010;"></div>
<div class="r" style="left:2292px;top:118px;width:1px;height:17px;background:#101010;"></div>
<div class="r" style="left:2374px;top:118px;width:1px;height:17px;background:#101010;"></div>
<div class="r" style="left:2456px;top:118px;width:1px;height:17px;background:#101010;"></div>
<div class="r" style="left:1669px;top:134px;width:17px;height:1px;background:#1a1a1a;"></div>
<svg style="position:absolute;left:1672px;top:120px;" width="12" height="12" viewBox="0 0 12 12"><path d="M9.8 2.6 A5 5 0 1 0 10.6 8.8" fill="none" stroke="#c8c8c8" stroke-width="1.8"/><path d="M5.2 2.8 L5.2 6.6 L8 8" fill="none" stroke="#c8c8c8" stroke-width="1.4"/><circle cx="10" cy="2.6" r="1.3" fill="#e0e0e0"/></svg>
<div class="t" style="left:1686px;top:121.69px;font-size:11px;line-height:11px;color:#fff;"><span style="display:inline-block;transform:scaleX(1.004);transform-origin:left">Core 1 Clock (perf #1/1)</span></div>
<div class="t" style="left:2205px;width:80px;text-align:right;top:121.69px;font-size:11px;line-height:11px;color:#fff;">5,200.0 MHz</div>
<div class="t" style="left:2287px;width:80px;text-align:right;top:121.69px;font-size:11px;line-height:11px;color:#fff;">4,140.0 MHz</div>
<div class="t" style="left:2369px;width:80px;text-align:right;top:121.69px;font-size:11px;line-height:11px;color:#fff;">5,275.0 MHz</div>
<div class="t" style="left:2451px;width:80px;text-align:right;top:121.69px;font-size:11px;line-height:11px;color:#fff;">5,112.5 MHz</div>
<div class="r" style="left:2210px;top:135px;width:1px;height:17px;background:#161616;"></div>
<div class="r" style="left:2292px;top:135px;width:1px;height:17px;background:#161616;"></div>
<div class="r" style="left:2374px;top:135px;width:1px;height:17px;background:#161616;"></div>
<div class="r" style="left:2456px;top:135px;width:1px;height:17px;background:#161616;"></div>
<div class="r" style="left:1669px;top:151px;width:17px;height:1px;background:#1a1a1a;"></div>
<svg style="position:absolute;left:1672px;top:137px;" width="12" height="12" viewBox="0 0 12 12"><path d="M9.8 2.6 A5 5 0 1 0 10.6 8.8" fill="none" stroke="#c8c8c8" stroke-width="1.8"/><path d="M5.2 2.8 L5.2 6.6 L8 8" fill="none" stroke="#c8c8c8" stroke-width="1.4"/><circle cx="10" cy="2.6" r="1.3" fill="#e0e0e0"/></svg>
<div class="t" style="left:1686px;top:138.69px;font-size:11px;line-height:11px;color:#fff;"><span style="display:inline-block;transform:scaleX(1.004);transform-origin:left">Core 2 Clock (perf #1/2)</span></div>
<div class="t" style="left:2205px;width:80px;text-align:right;top:138.69px;font-size:11px;line-height:11px;color:#fff;">5,150.0 MHz</div>
<div class="t" style="left:2287px;width:80px;text-align:right;top:138.69px;font-size:11px;line-height:11px;color:#fff;">3,433.3 MHz</div>
<div class="t" style="left:2369px;width:80px;text-align:right;top:138.69px;font-size:11px;line-height:11px;color:#fff;">5,275.0 MHz</div>
<div class="t" style="left:2451px;width:80px;text-align:right;top:138.69px;font-size:11px;line-height:11px;color:#fff;">5,122.2 MHz</div>
<div class="r" style="left:1685px;top:152px;width:854px;height:17px;background:#181818;"></div>
<div class="r" style="left:1669px;top:152px;width:16px;height:17px;background:#0e0e0e;"></div>
<div class="r" style="left:2210px;top:152px;width:1px;height:17px;background:#101010;"></div>
<div class="r" style="left:2292px;top:152px;width:1px;height:17px;background:#101010;"></div>
<div class="r" style="left:2374px;top:152px;width:1px;height:17px;background:#101010;"></div>
<div class="r" style="left:2456px;top:152px;width:1px;height:17px;background:#101010;"></div>
<div class="r" style="left:1669px;top:168px;width:17px;height:1px;background:#1a1a1a;"></div>
<svg style="position:absolute;left:1672px;top:154px;" width="12" height="12" viewBox="0 0 12 12"><path d="M9.8 2.6 A5 5 0 1 0 10.6 8.8" fill="none" stroke="#c8c8c8" stroke-width="1.8"/><path d="M5.2 2.8 L5.2 6.6 L8 8" fill="none" stroke="#c8c8c8" stroke-width="1.4"/><circle cx="10" cy="2.6" r="1.3" fill="#e0e0e0"/></svg>
<div class="t" style="left:1686px;top:155.69px;font-size:11px;line-height:11px;color:#fff;"><span style="display:inline-block;transform:scaleX(1.004);transform-origin:left">Core 3 Clock (perf #2/3)</span></div>
<div class="t" style="left:2205px;width:80px;text-align:right;top:155.69px;font-size:11px;line-height:11px;color:#fff;">5,150.0 MHz</div>
<div class="t" style="left:2287px;width:80px;text-align:right;top:155.69px;font-size:11px;line-height:11px;color:#fff;">4,140.0 MHz</div>
<div class="t" style="left:2369px;width:80px;text-align:right;top:155.69px;font-size:11px;line-height:11px;color:#fff;">5,250.0 MHz</div>
<div class="t" style="left:2451px;width:80px;text-align:right;top:155.69px;font-size:11px;line-height:11px;color:#fff;">5,101.8 MHz</div>
<div class="r" style="left:2210px;top:169px;width:1px;height:17px;background:#161616;"></div>
<div class="r" style="left:2292px;top:169px;width:1px;height:17px;background:#161616;"></div>
<div class="r" style="left:2374px;top:169px;width:1px;height:17px;background:#161616;"></div>
<div class="r" style="left:2456px;top:169px;width:1px;height:17px;background:#161616;"></div>
<div class="r" style="left:1669px;top:185px;width:17px;height:1px;background:#1a1a1a;"></div>
<svg style="position:absolute;left:1672px;top:171px;" width="12" height="12" viewBox="0 0 12 12"><path d="M9.8 2.6 A5 5 0 1 0 10.6 8.8" fill="none" stroke="#c8c8c8" stroke-width="1.8"/><path d="M5.2 2.8 L5.2 6.6 L8 8" fill="none" stroke="#c8c8c8" stroke-width="1.4"/><circle cx="10" cy="2.6" r="1.3" fill="#e0e0e0"/></svg>
<div class="t" style="left:1686px;top:172.69px;font-size:11px;line-height:11px;color:#fff;"><span style="display:inline-block;transform:scaleX(1.004);transform-origin:left">Core 4 Clock (perf #4/5)</span></div>
<div class="t" style="left:2205px;width:80px;text-align:right;top:172.69px;font-size:11px;line-height:11px;color:#fff;">5,100.0 MHz</div>
<div class="t" style="left:2287px;width:80px;text-align:right;top:172.69px;font-size:11px;line-height:11px;color:#fff;">3,433.3 MHz</div>
<div class="t" style="left:2369px;width:80px;text-align:right;top:172.69px;font-size:11px;line-height:11px;color:#fff;">5,300.0 MHz</div>
<div class="t" style="left:2451px;width:80px;text-align:right;top:172.69px;font-size:11px;line-height:11px;color:#fff;">5,119.1 MHz</div>
<div class="r" style="left:1685px;top:186px;width:854px;height:17px;background:#181818;"></div>
<div class="r" style="left:1669px;top:186px;width:16px;height:17px;background:#0e0e0e;"></div>
<div class="r" style="left:2210px;top:186px;width:1px;height:17px;background:#101010;"></div>
<div class="r" style="left:2292px;top:186px;width:1px;height:17px;background:#101010;"></div>
<div class="r" style="left:2374px;top:186px;width:1px;height:17px;background:#101010;"></div>
<div class="r" style="left:2456px;top:186px;width:1px;height:17px;background:#101010;"></div>
<div class="r" style="left:1669px;top:202px;width:17px;height:1px;background:#1a1a1a;"></div>
<svg style="position:absolute;left:1672px;top:188px;" width="12" height="12" viewBox="0 0 12 12"><path d="M9.8 2.6 A5 5 0 1 0 10.6 8.8" fill="none" stroke="#c8c8c8" stroke-width="1.8"/><path d="M5.2 2.8 L5.2 6.6 L8 8" fill="none" stroke="#c8c8c8" stroke-width="1.4"/><circle cx="10" cy="2.6" r="1.3" fill="#e0e0e0"/></svg>
<div class="t" style="left:1686px;top:189.69px;font-size:11px;line-height:11px;color:#fff;"><span style="display:inline-block;transform:scaleX(1.004);transform-origin:left">Core 5 Clock (perf #3/4)</span></div>
<div class="t" style="left:2205px;width:80px;text-align:right;top:189.69px;font-size:11px;line-height:11px;color:#fff;">5,125.0 MHz</div>
<div class="t" style="left:2287px;width:80px;text-align:right;top:189.69px;font-size:11px;line-height:11px;color:#fff;">4,140.0 MHz</div>
<div class="t" style="left:2369px;width:80px;text-align:right;top:189.69px;font-size:11px;line-height:11px;color:#fff;">5,250.0 MHz</div>
<div class="t" style="left:2451px;width:80px;text-align:right;top:189.69px;font-size:11px;line-height:11px;color:#fff;">5,129.3 MHz</div>
<div class="r" style="left:2210px;top:203px;width:1px;height:17px;background:#161616;"></div>
<div class="r" style="left:2292px;top:203px;width:1px;height:17px;background:#161616;"></div>
<div class="r" style="left:2374px;top:203px;width:1px;height:17px;background:#161616;"></div>
<div class="r" style="left:2456px;top:203px;width:1px;height:17px;background:#161616;"></div>
<div class="r" style="left:1669px;top:220px;width:870px;height:17px;background:#242424;"></div>
<div class="r" style="left:1653px;top:220px;width:16px;height:17px;background:#0e0e0e;"></div>
<div class="r" style="left:2210px;top:220px;width:1px;height:17px;background:#101010;"></div>
<div class="r" style="left:2292px;top:220px;width:1px;height:17px;background:#101010;"></div>
<div class="r" style="left:2374px;top:220px;width:1px;height:17px;background:#101010;"></div>
<div class="r" style="left:2456px;top:220px;width:1px;height:17px;background:#101010;"></div>
<div class="r" style="left:1653px;top:236px;width:17px;height:1px;background:#1a1a1a;"></div>
<svg style="position:absolute;left:1639px;top:222px;" width="8" height="13" viewBox="0 0 8 13"><path d="M0.8 0.5 L6.6 6.5 L0.8 12.5" fill="none" stroke="#d0d0d0" stroke-width="1"/></svg>
<svg style="position:absolute;left:1654px;top:221px;" width="14" height="15" viewBox="0 0 14 15"><defs><linearGradient id="cg" x1="0" x2="0" y1="0" y2="1"><stop offset="0" stop-color="#8a8a8a"/><stop offset="1" stop-color="#4a4a4a"/></linearGradient></defs><rect x="2" y="0.5" width="10" height="14" rx="1.5" fill="url(#cg)"/><rect x="0" y="2" width="2" height="1.5" fill="#c8c8c8"/><rect x="12" y="2" width="2" height="1.5" fill="#c8c8c8"/><rect x="0" y="5" width="2" height="1.5" fill="#c8c8c8"/><rect x="12" y="5" width="2" height="1.5" fill="#c8c8c8"/><rect x="0" y="8" width="2" height="1.5" fill="#c8c8c8"/><rect x="12" y="8" width="2" height="1.5" fill="#c8c8c8"/><rect x="0" y="11" width="2" height="1.5" fill="#c8c8c8"/><rect x="12" y="11" width="2" height="1.5" fill="#c8c8c8"/></svg>
<div class="t" style="left:1671px;top:223.69px;font-size:11px;line-height:11px;color:#fff;font-weight:700;letter-spacing:0.4px;">Memory Timings</div>
<div class="r" style="left:1669px;top:237px;width:870px;height:17px;background:#181818;"></div>
<div class="r" style="left:1653px;top:237px;width:16px;height:17px;background:#0e0e0e;"></div>
<div class="r" style="left:2210px;top:237px;width:1px;height:17px;background:#101010;"></div>
<div class="r" style="left:2292px;top:237px;width:1px;height:17px;background:#101010;"></div>
<div class="r" style="left:2374px;top:237px;width:1px;height:17px;background:#101010;"></div>
<div class="r" style="left:2456px;top:237px;width:1px;height:17px;background:#101010;"></div>
<div class="r" style="left:1669px;top:254px;width:870px;height:17px;background:#242424;"></div>
<div class="r" style="left:1653px;top:254px;width:16px;height:17px;background:#0e0e0e;"></div>
<div class="r" style="left:2210px;top:254px;width:1px;height:17px;background:#101010;"></div>
<div class="r" style="left:2292px;top:254px;width:1px;height:17px;background:#101010;"></div>
<div class="r" style="left:2374px;top:254px;width:1px;height:17px;background:#101010;"></div>
<div class="r" style="left:2456px;top:254px;width:1px;height:17px;background:#101010;"></div>
<div class="r" style="left:1653px;top:270px;width:17px;height:1px;background:#1a1a1a;"></div>
<svg style="position:absolute;left:1636px;top:259px;" width="13" height="8" viewBox="0 0 13 8"><path d="M0.5 0.8 L6.5 6.6 L12.5 0.8" fill="none" stroke="#d0d0d0" stroke-width="1"/></svg>
<svg style="position:absolute;left:1654px;top:255px;" width="14" height="15" viewBox="0 0 14 15"><defs><linearGradient id="cg" x1="0" x2="0" y1="0" y2="1"><stop offset="0" stop-color="#8a8a8a"/><stop offset="1" stop-color="#4a4a4a"/></linearGradient></defs><rect x="2" y="0.5" width="10" height="14" rx="1.5" fill="url(#cg)"/><rect x="0" y="2" width="2" height="1.5" fill="#c8c8c8"/><rect x="12" y="2" width="2" height="1.5" fill="#c8c8c8"/><rect x="0" y="5" width="2" height="1.5" fill="#c8c8c8"/><rect x="12" y="5" width="2" height="1.5" fill="#c8c8c8"/><rect x="0" y="8" width="2" height="1.5" fill="#c8c8c8"/><rect x="12" y="8" width="2" height="1.5" fill="#c8c8c8"/><rect x="0" y="11" width="2" height="1.5" fill="#c8c8c8"/><rect x="12" y="11" width="2" height="1.5" fill="#c8c8c8"/></svg>
<div class="t" style="left:1671px;top:257.69px;font-size:11px;line-height:11px;color:#fff;font-weight:700;letter-spacing:0.4px;">CPU [#0]: AMD Ryzen 5 7600: Enhanced</div>
<div class="r" style="left:1669px;top:271px;width:870px;height:17px;background:#181818;"></div>
<div class="r" style="left:1653px;top:271px;width:16px;height:17px;background:#0e0e0e;"></div>
<div class="r" style="left:2210px;top:271px;width:1px;height:17px;background:#101010;"></div>
<div class="r" style="left:2292px;top:271px;width:1px;height:17px;background:#101010;"></div>
<div class="r" style="left:2374px;top:271px;width:1px;height:17px;background:#101010;"></div>
<div class="r" style="left:2456px;top:271px;width:1px;height:17px;background:#101010;"></div>
<div class="r" style="left:1653px;top:287px;width:17px;height:1px;background:#1a1a1a;"></div>
<svg style="position:absolute;left:1659px;top:272px;" width="5" height="15" viewBox="0 0 5 15"><rect x="1.6" y="0.5" width="1.8" height="10" rx="0.9" fill="#f0f0f0"/><rect x="1.8" y="4.5" width="1.4" height="7" fill="#d81818"/><circle cx="2.5" cy="12.3" r="1.9" fill="#d81818"/></svg>
<div class="t" style="left:1670px;top:274.69px;font-size:11px;line-height:11px;color:#fff;"><span style="display:inline-block;transform:scaleX(0.957);transform-origin:left">CPU (Tctl/Tdie)</span></div>
<div class="t" style="left:2205px;width:80px;text-align:right;top:274.69px;font-size:11px;line-height:11px;color:#fff;">85.8 °C</div>
<div class="t" style="left:2287px;width:80px;text-align:right;top:274.69px;font-size:11px;line-height:11px;color:#fff;">40.6 °C</div>
<div class="t" style="left:2369px;width:80px;text-align:right;top:274.69px;font-size:11px;line-height:11px;color:#fff;">86.8 °C</div>
<div class="t" style="left:2451px;width:80px;text-align:right;top:274.69px;font-size:11px;line-height:11px;color:#fff;">85.5 °C</div>
<div class="r" style="left:2210px;top:288px;width:1px;height:17px;background:#161616;"></div>
<div class="r" style="left:2292px;top:288px;width:1px;height:17px;background:#161616;"></div>
<div class="r" style="left:2374px;top:288px;width:1px;height:17px;background:#161616;"></div>
<div class="r" style="left:2456px;top:288px;width:1px;height:17px;background:#161616;"></div>
<div class="r" style="left:1653px;top:304px;width:17px;height:1px;background:#1a1a1a;"></div>
<svg style="position:absolute;left:1659px;top:289px;" width="5" height="15" viewBox="0 0 5 15"><rect x="1.6" y="0.5" width="1.8" height="10" rx="0.9" fill="#f0f0f0"/><rect x="1.8" y="4.5" width="1.4" height="7" fill="#d81818"/><circle cx="2.5" cy="12.3" r="1.9" fill="#d81818"/></svg>
<div class="t" style="left:1670px;top:291.69px;font-size:11px;line-height:11px;color:#fff;"><span style="display:inline-block;transform:scaleX(0.975);transform-origin:left">CPU Die (average)</span></div>
<div class="t" style="left:2205px;width:80px;text-align:right;top:291.69px;font-size:11px;line-height:11px;color:#fff;">82.8 °C</div>
<div class="t" style="left:2287px;width:80px;text-align:right;top:291.69px;font-size:11px;line-height:11px;color:#fff;">39.8 °C</div>
<div class="t" style="left:2369px;width:80px;text-align:right;top:291.69px;font-size:11px;line-height:11px;color:#fff;">84.5 °C</div>
<div class="t" style="left:2451px;width:80px;text-align:right;top:291.69px;font-size:11px;line-height:11px;color:#fff;">82.3 °C</div>
<div class="r" style="left:1669px;top:305px;width:870px;height:17px;background:#181818;"></div>
<div class="r" style="left:1653px;top:305px;width:16px;height:17px;background:#0e0e0e;"></div>
<div class="r" style="left:2210px;top:305px;width:1px;height:17px;background:#101010;"></div>
<div class="r" style="left:2292px;top:305px;width:1px;height:17px;background:#101010;"></div>
<div class="r" style="left:2374px;top:305px;width:1px;height:17px;background:#101010;"></div>
<div class="r" style="left:2456px;top:305px;width:1px;height:17px;background:#101010;"></div>
<div class="r" style="left:1653px;top:321px;width:17px;height:1px;background:#1a1a1a;"></div>
<svg style="position:absolute;left:1659px;top:306px;" width="5" height="15" viewBox="0 0 5 15"><rect x="1.6" y="0.5" width="1.8" height="10" rx="0.9" fill="#f0f0f0"/><rect x="1.8" y="4.5" width="1.4" height="7" fill="#d81818"/><circle cx="2.5" cy="12.3" r="1.9" fill="#d81818"/></svg>
<div class="t" style="left:1670px;top:308.69px;font-size:11px;line-height:11px;color:#fff;"><span style="display:inline-block;transform:scaleX(0.931);transform-origin:left">CPU CCD1 (Tdie)</span></div>
<div class="t" style="left:2205px;width:80px;text-align:right;top:308.69px;font-size:11px;line-height:11px;color:#fff;">83.6 °C</div>
<div class="t" style="left:2287px;width:80px;text-align:right;top:308.69px;font-size:11px;line-height:11px;color:#fff;">34.2 °C</div>
<div class="t" style="left:2369px;width:80px;text-align:right;top:308.69px;font-size:11px;line-height:11px;color:#fff;">89.6 °C</div>
<div class="t" style="left:2451px;width:80px;text-align:right;top:308.69px;font-size:11px;line-height:11px;color:#fff;">82.1 °C</div>
<div class="r" style="left:2210px;top:322px;width:1px;height:17px;background:#161616;"></div>
<div class="r" style="left:2292px;top:322px;width:1px;height:17px;background:#161616;"></div>
<div class="r" style="left:2374px;top:322px;width:1px;height:17px;background:#161616;"></div>
<div class="r" style="left:2456px;top:322px;width:1px;height:17px;background:#161616;"></div>
<div class="r" style="left:1669px;top:338px;width:17px;height:1px;background:#1a1a1a;"></div>
<svg style="position:absolute;left:1655px;top:324px;" width="8" height="13" viewBox="0 0 8 13"><path d="M0.8 0.5 L6.6 6.5 L0.8 12.5" fill="none" stroke="#d0d0d0" stroke-width="1"/></svg>
<svg style="position:absolute;left:1675px;top:323px;" width="5" height="15" viewBox="0 0 5 15"><rect x="1.6" y="0.5" width="1.8" height="10" rx="0.9" fill="#f0f0f0"/><rect x="1.8" y="4.5" width="1.4" height="7" fill="#d81818"/><circle cx="2.5" cy="12.3" r="1.9" fill="#d81818"/></svg>
<div class="t" style="left:1686px;top:325.69px;font-size:11px;line-height:11px;color:#fff;">Core Temperatures</div>
<div class="t" style="left:2205px;width:80px;text-align:right;top:325.69px;font-size:11px;line-height:11px;color:#fff;">73.7 °C</div>
<div class="t" style="left:2287px;width:80px;text-align:right;top:325.69px;font-size:11px;line-height:11px;color:#fff;">27.2 °C</div>
<div class="t" style="left:2369px;width:80px;text-align:right;top:325.69px;font-size:11px;line-height:11px;color:#fff;">80.2 °C</div>
<div class="t" style="left:2451px;width:80px;text-align:right;top:325.69px;font-size:11px;line-height:11px;color:#fff;">72.7 °C</div>
<div class="r" style="left:1685px;top:339px;width:854px;height:17px;background:#181818;"></div>
<div class="r" style="left:1669px;top:339px;width:16px;height:17px;background:#0e0e0e;"></div>
<div class="r" style="left:2210px;top:339px;width:1px;height:17px;background:#101010;"></div>
<div class="r" style="left:2292px;top:339px;width:1px;height:17px;background:#101010;"></div>
<div class="r" style="left:2374px;top:339px;width:1px;height:17px;background:#101010;"></div>
<div class="r" style="left:2456px;top:339px;width:1px;height:17px;background:#101010;"></div>
<div class="r" style="left:1669px;top:355px;width:17px;height:1px;background:#1a1a1a;"></div>
<svg style="position:absolute;left:1655px;top:341px;" width="8" height="13" viewBox="0 0 8 13"><path d="M0.8 0.5 L6.6 6.5 L0.8 12.5" fill="none" stroke="#d0d0d0" stroke-width="1"/></svg>
<svg style="position:absolute;left:1675px;top:340px;" width="5" height="15" viewBox="0 0 5 15"><rect x="1.6" y="0.5" width="1.8" height="10" rx="0.9" fill="#f0f0f0"/><rect x="1.8" y="4.5" width="1.4" height="7" fill="#d81818"/><circle cx="2.5" cy="12.3" r="1.9" fill="#d81818"/></svg>
<div class="t" style="left:1686px;top:342.69px;font-size:11px;line-height:11px;color:#fff;"><span style="display:inline-block;transform:scaleX(0.995);transform-origin:left">L3 Temperatures</span></div>
<div class="t" style="left:2205px;width:80px;text-align:right;top:342.69px;font-size:11px;line-height:11px;color:#fff;">42.8 °C</div>
<div class="t" style="left:2287px;width:80px;text-align:right;top:342.69px;font-size:11px;line-height:11px;color:#fff;">28.3 °C</div>
<div class="t" style="left:2369px;width:80px;text-align:right;top:342.69px;font-size:11px;line-height:11px;color:#fff;">43.1 °C</div>
<div class="t" style="left:2451px;width:80px;text-align:right;top:342.69px;font-size:11px;line-height:11px;color:#fff;">42.4 °C</div>
<div class="r" style="left:1669px;top:356px;width:870px;height:17px;background:#181818;"></div>
<div class="r" style="left:1653px;top:356px;width:16px;height:17px;background:#0e0e0e;"></div>
<div class="r" style="left:2210px;top:356px;width:1px;height:17px;background:#101010;"></div>
<div class="r" style="left:2292px;top:356px;width:1px;height:17px;background:#101010;"></div>
<div class="r" style="left:2374px;top:356px;width:1px;height:17px;background:#101010;"></div>
<div class="r" style="left:2456px;top:356px;width:1px;height:17px;background:#101010;"></div>
<div class="r" style="left:1653px;top:372px;width:17px;height:1px;background:#1a1a1a;"></div>
<svg style="position:absolute;left:1659px;top:357px;" width="5" height="15" viewBox="0 0 5 15"><rect x="1.6" y="0.5" width="1.8" height="10" rx="0.9" fill="#f0f0f0"/><rect x="1.8" y="4.5" width="1.4" height="7" fill="#d81818"/><circle cx="2.5" cy="12.3" r="1.9" fill="#d81818"/></svg>
<div class="t" style="left:1670px;top:359.69px;font-size:11px;line-height:11px;color:#fff;"><span style="display:inline-block;transform:scaleX(0.931);transform-origin:left">CPU IOD Hotspot</span></div>
<div class="t" style="left:2205px;width:80px;text-align:right;top:359.69px;font-size:11px;line-height:11px;color:#fff;">47.2 °C</div>
<div class="t" style="left:2287px;width:80px;text-align:right;top:359.69px;font-size:11px;line-height:11px;color:#fff;">39.5 °C</div>
<div class="t" style="left:2369px;width:80px;text-align:right;top:359.69px;font-size:11px;line-height:11px;color:#fff;">49.8 °C</div>
<div class="t" style="left:2451px;width:80px;text-align:right;top:359.69px;font-size:11px;line-height:11px;color:#fff;">47.5 °C</div>
<div class="r" style="left:2210px;top:373px;width:1px;height:17px;background:#161616;"></div>
<div class="r" style="left:2292px;top:373px;width:1px;height:17px;background:#161616;"></div>
<div class="r" style="left:2374px;top:373px;width:1px;height:17px;background:#161616;"></div>
<div class="r" style="left:2456px;top:373px;width:1px;height:17px;background:#161616;"></div>
<div class="r" style="left:1653px;top:389px;width:17px;height:1px;background:#1a1a1a;"></div>
<svg style="position:absolute;left:1659px;top:374px;" width="5" height="15" viewBox="0 0 5 15"><rect x="1.6" y="0.5" width="1.8" height="10" rx="0.9" fill="#f0f0f0"/><rect x="1.8" y="4.5" width="1.4" height="7" fill="#d81818"/><circle cx="2.5" cy="12.3" r="1.9" fill="#d81818"/></svg>
<div class="t" style="left:1670px;top:376.69px;font-size:11px;line-height:11px;color:#fff;"><span style="display:inline-block;transform:scaleX(0.931);transform-origin:left">CPU IOD Average</span></div>
<div class="t" style="left:2205px;width:80px;text-align:right;top:376.69px;font-size:11px;line-height:11px;color:#fff;">41.3 °C</div>
<div class="t" style="left:2287px;width:80px;text-align:right;top:376.69px;font-size:11px;line-height:11px;color:#fff;">35.9 °C</div>
<div class="t" style="left:2369px;width:80px;text-align:right;top:376.69px;font-size:11px;line-height:11px;color:#fff;">41.9 °C</div>
<div class="t" style="left:2451px;width:80px;text-align:right;top:376.69px;font-size:11px;line-height:11px;color:#fff;">41.2 °C</div>
<div class="r" style="left:1669px;top:390px;width:870px;height:17px;background:#181818;"></div>
<div class="r" style="left:1653px;top:390px;width:16px;height:17px;background:#0e0e0e;"></div>
<div class="r" style="left:2210px;top:390px;width:1px;height:17px;background:#101010;"></div>
<div class="r" style="left:2292px;top:390px;width:1px;height:17px;background:#101010;"></div>
<div class="r" style="left:2374px;top:390px;width:1px;height:17px;background:#101010;"></div>
<div class="r" style="left:2456px;top:390px;width:1px;height:17px;background:#101010;"></div>
<div class="r" style="left:1653px;top:406px;width:17px;height:1px;background:#1a1a1a;"></div>
<svg style="position:absolute;left:1659px;top:391px;" width="5" height="15" viewBox="0 0 5 15"><rect x="1.6" y="0.5" width="1.8" height="10" rx="0.9" fill="#f0f0f0"/><rect x="1.8" y="4.5" width="1.4" height="7" fill="#d81818"/><circle cx="2.5" cy="12.3" r="1.9" fill="#d81818"/></svg>
<div class="t" style="left:1670px;top:393.69px;font-size:11px;line-height:11px;color:#fff;"><span style="display:inline-block;transform:scaleX(0.884);transform-origin:left">CPU VDDCR_VDD VRM (SVI3 TFN)</span></div>
<div class="t" style="left:2205px;width:80px;text-align:right;top:393.69px;font-size:11px;line-height:11px;color:#fff;">37.0 °C</div>
<div class="t" style="left:2287px;width:80px;text-align:right;top:393.69px;font-size:11px;line-height:11px;color:#fff;">31.9 °C</div>
<div class="t" style="left:2369px;width:80px;text-align:right;top:393.69px;font-size:11px;line-height:11px;color:#fff;">37.0 °C</div>
<div class="t" style="left:2451px;width:80px;text-align:right;top:393.69px;font-size:11px;line-height:11px;color:#fff;">35.8 °C</div>
<div class="r" style="left:2210px;top:407px;width:1px;height:17px;background:#161616;"></div>
<div class="r" style="left:2292px;top:407px;width:1px;height:17px;background:#161616;"></div>
<div class="r" style="left:2374px;top:407px;width:1px;height:17px;background:#161616;"></div>
<div class="r" style="left:2456px;top:407px;width:1px;height:17px;background:#161616;"></div>
<div class="r" style="left:1653px;top:423px;width:17px;height:1px;background:#1a1a1a;"></div>
<svg style="position:absolute;left:1659px;top:408px;" width="5" height="15" viewBox="0 0 5 15"><rect x="1.6" y="0.5" width="1.8" height="10" rx="0.9" fill="#f0f0f0"/><rect x="1.8" y="4.5" width="1.4" height="7" fill="#d81818"/><circle cx="2.5" cy="12.3" r="1.9" fill="#d81818"/></svg>
<div class="t" style="left:1670px;top:410.69px;font-size:11px;line-height:11px;color:#fff;"><span style="display:inline-block;transform:scaleX(0.884);transform-origin:left">CPU VDDCR_SOC VRM (SVI3 TFN)</span></div>
<div class="t" style="left:2205px;width:80px;text-align:right;top:410.69px;font-size:11px;line-height:11px;color:#fff;">31.7 °C</div>
<div class="t" style="left:2287px;width:80px;text-align:right;top:410.69px;font-size:11px;line-height:11px;color:#fff;">29.0 °C</div>
<div class="t" style="left:2369px;width:80px;text-align:right;top:410.69px;font-size:11px;line-height:11px;color:#fff;">31.7 °C</div>
<div class="t" style="left:2451px;width:80px;text-align:right;top:410.69px;font-size:11px;line-height:11px;color:#fff;">30.7 °C</div>
<div class="r" style="left:1669px;top:424px;width:870px;height:17px;background:#181818;"></div>
<div class="r" style="left:1653px;top:424px;width:16px;height:17px;background:#0e0e0e;"></div>
<div class="r" style="left:2210px;top:424px;width:1px;height:17px;background:#101010;"></div>
<div class="r" style="left:2292px;top:424px;width:1px;height:17px;background:#101010;"></div>
<div class="r" style="left:2374px;top:424px;width:1px;height:17px;background:#101010;"></div>
<div class="r" style="left:2456px;top:424px;width:1px;height:17px;background:#101010;"></div>
<div class="r" style="left:1653px;top:440px;width:17px;height:1px;background:#1a1a1a;"></div>
<svg style="position:absolute;left:1659px;top:425px;" width="5" height="15" viewBox="0 0 5 15"><rect x="1.6" y="0.5" width="1.8" height="10" rx="0.9" fill="#f0f0f0"/><rect x="1.8" y="4.5" width="1.4" height="7" fill="#d81818"/><circle cx="2.5" cy="12.3" r="1.9" fill="#d81818"/></svg>
<div class="t" style="left:1670px;top:427.69px;font-size:11px;line-height:11px;color:#fff;"><span style="display:inline-block;transform:scaleX(0.886);transform-origin:left">CPU VDD_MISC VRM (SVI3 TFN)</span></div>
<div class="t" style="left:2205px;width:80px;text-align:right;top:427.69px;font-size:11px;line-height:11px;color:#fff;">34.0 °C</div>
<div class="t" style="left:2287px;width:80px;text-align:right;top:427.69px;font-size:11px;line-height:11px;color:#fff;">31.3 °C</div>
<div class="t" style="left:2369px;width:80px;text-align:right;top:427.69px;font-size:11px;line-height:11px;color:#fff;">34.0 °C</div>
<div class="t" style="left:2451px;width:80px;text-align:right;top:427.69px;font-size:11px;line-height:11px;color:#fff;">33.4 °C</div>
<div class="r" style="left:2210px;top:441px;width:1px;height:17px;background:#161616;"></div>
<div class="r" style="left:2292px;top:441px;width:1px;height:17px;background:#161616;"></div>
<div class="r" style="left:2374px;top:441px;width:1px;height:17px;background:#161616;"></div>
<div class="r" style="left:2456px;top:441px;width:1px;height:17px;background:#161616;"></div>
<div class="r" style="left:1653px;top:457px;width:17px;height:1px;background:#1a1a1a;"></div>
<svg style="position:absolute;left:1657px;top:442px;" width="9" height="15" viewBox="0 0 9 15"><path d="M5.5 0 L8.5 0 L5.8 5.5 L8.8 5.5 L1 15 L3.2 8.2 L0.5 8.2 Z" fill="#f0c020"/></svg>
<div class="t" style="left:1670px;top:444.69px;font-size:11px;line-height:11px;color:#fff;"><span style="display:inline-block;transform:scaleX(0.913);transform-origin:left">CPU VDDCR_VDD Voltage (SVI3 TFN)</span></div>
<div class="t" style="left:2205px;width:80px;text-align:right;top:444.69px;font-size:11px;line-height:11px;color:#fff;">1.252 V</div>
<div class="t" style="left:2287px;width:80px;text-align:right;top:444.69px;font-size:11px;line-height:11px;color:#fff;">1.174 V</div>
<div class="t" style="left:2369px;width:80px;text-align:right;top:444.69px;font-size:11px;line-height:11px;color:#fff;">1.274 V</div>
<div class="t" style="left:2451px;width:80px;text-align:right;top:444.69px;font-size:11px;line-height:11px;color:#fff;">1.247 V</div>
<div class="r" style="left:1669px;top:458px;width:870px;height:17px;background:#181818;"></div>
<div class="r" style="left:1653px;top:458px;width:16px;height:17px;background:#0e0e0e;"></div>
<div class="r" style="left:2210px;top:458px;width:1px;height:17px;background:#101010;"></div>
<div class="r" style="left:2292px;top:458px;width:1px;height:17px;background:#101010;"></div>
<div class="r" style="left:2374px;top:458px;width:1px;height:17px;background:#101010;"></div>
<div class="r" style="left:2456px;top:458px;width:1px;height:17px;background:#101010;"></div>
<div class="r" style="left:1653px;top:474px;width:17px;height:1px;background:#1a1a1a;"></div>
<svg style="position:absolute;left:1657px;top:459px;" width="9" height="15" viewBox="0 0 9 15"><path d="M5.5 0 L8.5 0 L5.8 5.5 L8.8 5.5 L1 15 L3.2 8.2 L0.5 8.2 Z" fill="#f0c020"/></svg>
<div class="t" style="left:1670px;top:461.69px;font-size:11px;line-height:11px;color:#fff;"><span style="display:inline-block;transform:scaleX(0.913);transform-origin:left">CPU VDDCR_SOC Voltage (SVI3 TFN)</span></div>
<div class="t" style="left:2205px;width:80px;text-align:right;top:461.69px;font-size:11px;line-height:11px;color:#fff;">1.305 V</div>
<div class="t" style="left:2287px;width:80px;text-align:right;top:461.69px;font-size:11px;line-height:11px;color:#fff;">1.305 V</div>
<div class="t" style="left:2369px;width:80px;text-align:right;top:461.69px;font-size:11px;line-height:11px;color:#fff;">1.305 V</div>
<div class="t" style="left:2451px;width:80px;text-align:right;top:461.69px;font-size:11px;line-height:11px;color:#fff;">1.305 V</div>
<div class="r" style="left:2210px;top:475px;width:1px;height:17px;background:#161616;"></div>
<div class="r" style="left:2292px;top:475px;width:1px;height:17px;background:#161616;"></div>
<div class="r" style="left:2374px;top:475px;width:1px;height:17px;background:#161616;"></div>
<div class="r" style="left:2456px;top:475px;width:1px;height:17px;background:#161616;"></div>
<div class="r" style="left:1653px;top:491px;width:17px;height:1px;background:#1a1a1a;"></div>
<svg style="position:absolute;left:1657px;top:476px;" width="9" height="15" viewBox="0 0 9 15"><path d="M5.5 0 L8.5 0 L5.8 5.5 L8.8 5.5 L1 15 L3.2 8.2 L0.5 8.2 Z" fill="#f0c020"/></svg>
<div class="t" style="left:1670px;top:478.69px;font-size:11px;line-height:11px;color:#fff;"><span style="display:inline-block;transform:scaleX(0.916);transform-origin:left">CPU VDD_MISC Voltage (SVI3 TFN)</span></div>
<div class="t" style="left:2205px;width:80px;text-align:right;top:478.69px;font-size:11px;line-height:11px;color:#fff;">1.090 V</div>
<div class="t" style="left:2287px;width:80px;text-align:right;top:478.69px;font-size:11px;line-height:11px;color:#fff;">1.090 V</div>
<div class="t" style="left:2369px;width:80px;text-align:right;top:478.69px;font-size:11px;line-height:11px;color:#fff;">1.090 V</div>
<div class="t" style="left:2451px;width:80px;text-align:right;top:478.69px;font-size:11px;line-height:11px;color:#fff;">1.090 V</div>
<div class="r" style="left:1669px;top:492px;width:870px;height:17px;background:#181818;"></div>
<div class="r" style="left:1653px;top:492px;width:16px;height:17px;background:#0e0e0e;"></div>
<div class="r" style="left:2210px;top:492px;width:1px;height:17px;background:#101010;"></div>
<div class="r" style="left:2292px;top:492px;width:1px;height:17px;background:#101010;"></div>
<div class="r" style="left:2374px;top:492px;width:1px;height:17px;background:#101010;"></div>
<div class="r" style="left:2456px;top:492px;width:1px;height:17px;background:#101010;"></div>
<div class="r" style="left:1653px;top:508px;width:17px;height:1px;background:#1a1a1a;"></div>
<svg style="position:absolute;left:1657px;top:493px;" width="9" height="15" viewBox="0 0 9 15"><path d="M5.5 0 L8.5 0 L5.8 5.5 L8.8 5.5 L1 15 L3.2 8.2 L0.5 8.2 Z" fill="#f0c020"/></svg>
<div class="t" style="left:1670px;top:495.69px;font-size:11px;line-height:11px;color:#fff;"><span style="display:inline-block;transform:scaleX(0.943);transform-origin:left">CPU Core Current (SVI3 TFN)</span></div>
<div class="t" style="left:2205px;width:80px;text-align:right;top:495.69px;font-size:11px;line-height:11px;color:#fff;">51.696 A</div>
<div class="t" style="left:2287px;width:80px;text-align:right;top:495.69px;font-size:11px;line-height:11px;color:#fff;">2.644 A</div>
<div class="t" style="left:2369px;width:80px;text-align:right;top:495.69px;font-size:11px;line-height:11px;color:#fff;">54.149 A</div>
<div class="t" style="left:2451px;width:80px;text-align:right;top:495.69px;font-size:11px;line-height:11px;color:#fff;">51.069 A</div>
<div class="r" style="left:2210px;top:509px;width:1px;height:17px;background:#161616;"></div>
<div class="r" style="left:2292px;top:509px;width:1px;height:17px;background:#161616;"></div>
<div class="r" style="left:2374px;top:509px;width:1px;height:17px;background:#161616;"></div>
<div class="r" style="left:2456px;top:509px;width:1px;height:17px;background:#161616;"></div>
<div class="r" style="left:1653px;top:525px;width:17px;height:1px;background:#1a1a1a;"></div>
<svg style="position:absolute;left:1657px;top:510px;" width="9" height="15" viewBox="0 0 9 15"><path d="M5.5 0 L8.5 0 L5.8 5.5 L8.8 5.5 L1 15 L3.2 8.2 L0.5 8.2 Z" fill="#f0c020"/></svg>
<div class="t" style="left:1670px;top:512.69px;font-size:11px;line-height:11px;color:#fff;"><span style="display:inline-block;transform:scaleX(0.942);transform-origin:left">SoC Current (SVI3 TFN)</span></div>
<div class="t" style="left:2205px;width:80px;text-align:right;top:512.69px;font-size:11px;line-height:11px;color:#fff;">12.187 A</div>
<div class="t" style="left:2287px;width:80px;text-align:right;top:512.69px;font-size:11px;line-height:11px;color:#fff;">10.235 A</div>
<div class="t" style="left:2369px;width:80px;text-align:right;top:512.69px;font-size:11px;line-height:11px;color:#fff;">12.331 A</div>
<div class="t" style="left:2451px;width:80px;text-align:right;top:512.69px;font-size:11px;line-height:11px;color:#fff;">12.162 A</div>
<div class="r" style="left:1669px;top:526px;width:870px;height:17px;background:#181818;"></div>
<div class="r" style="left:1653px;top:526px;width:16px;height:17px;background:#0e0e0e;"></div>
<div class="r" style="left:2210px;top:526px;width:1px;height:17px;background:#101010;"></div>
<div class="r" style="left:2292px;top:526px;width:1px;height:17px;background:#101010;"></div>
<div class="r" style="left:2374px;top:526px;width:1px;height:17px;background:#101010;"></div>
<div class="r" style="left:2456px;top:526px;width:1px;height:17px;background:#101010;"></div>
<div class="r" style="left:1653px;top:542px;width:17px;height:1px;background:#1a1a1a;"></div>
<svg style="position:absolute;left:1657px;top:527px;" width="9" height="15" viewBox="0 0 9 15"><path d="M5.5 0 L8.5 0 L5.8 5.5 L8.8 5.5 L1 15 L3.2 8.2 L0.5 8.2 Z" fill="#f0c020"/></svg>
<div class="t" style="left:1670px;top:529.69px;font-size:11px;line-height:11px;color:#fff;"><span style="display:inline-block;transform:scaleX(0.857);transform-origin:left">CPU TDC</span></div>
<div class="t" style="left:2205px;width:80px;text-align:right;top:529.69px;font-size:11px;line-height:11px;color:#fff;">51.693 A</div>
<div class="t" style="left:2287px;width:80px;text-align:right;top:529.69px;font-size:11px;line-height:11px;color:#fff;">2.650 A</div>
<div class="t" style="left:2369px;width:80px;text-align:right;top:529.69px;font-size:11px;line-height:11px;color:#fff;">54.102 A</div>
<div class="t" style="left:2451px;width:80px;text-align:right;top:529.69px;font-size:11px;line-height:11px;color:#fff;">51.069 A</div>
<div class="r" style="left:2210px;top:543px;width:1px;height:17px;background:#161616;"></div>
<div class="r" style="left:2292px;top:543px;width:1px;height:17px;background:#161616;"></div>
<div class="r" style="left:2374px;top:543px;width:1px;height:17px;background:#161616;"></div>
<div class="r" style="left:2456px;top:543px;width:1px;height:17px;background:#161616;"></div>
<div class="r" style="left:1653px;top:559px;width:17px;height:1px;background:#1a1a1a;"></div>
<svg style="position:absolute;left:1657px;top:544px;" width="9" height="15" viewBox="0 0 9 15"><path d="M5.5 0 L8.5 0 L5.8 5.5 L8.8 5.5 L1 15 L3.2 8.2 L0.5 8.2 Z" fill="#f0c020"/></svg>
<div class="t" style="left:1670px;top:546.69px;font-size:11px;line-height:11px;color:#fff;"><span style="display:inline-block;transform:scaleX(0.857);transform-origin:left">CPU EDC</span></div>
<div class="t" style="left:2205px;width:80px;text-align:right;top:546.69px;font-size:11px;line-height:11px;color:#fff;">68.500 A</div>
<div class="t" style="left:2287px;width:80px;text-align:right;top:546.69px;font-size:11px;line-height:11px;color:#fff;">14.500 A</div>
<div class="t" style="left:2369px;width:80px;text-align:right;top:546.69px;font-size:11px;line-height:11px;color:#fff;">77.000 A</div>
<div class="t" style="left:2451px;width:80px;text-align:right;top:546.69px;font-size:11px;line-height:11px;color:#fff;">67.961 A</div>
<div class="r" style="left:1669px;top:560px;width:870px;height:17px;background:#181818;"></div>
<div class="r" style="left:1653px;top:560px;width:16px;height:17px;background:#0e0e0e;"></div>
<div class="r" style="left:2210px;top:560px;width:1px;height:17px;background:#101010;"></div>
<div class="r" style="left:2292px;top:560px;width:1px;height:17px;background:#101010;"></div>
<div class="r" style="left:2374px;top:560px;width:1px;height:17px;background:#101010;"></div>
<div class="r" style="left:2456px;top:560px;width:1px;height:17px;background:#101010;"></div>
<div class="r" style="left:1653px;top:576px;width:17px;height:1px;background:#1a1a1a;"></div>
<svg style="position:absolute;left:1657px;top:561px;" width="9" height="15" viewBox="0 0 9 15"><path d="M5.5 0 L8.5 0 L5.8 5.5 L8.8 5.5 L1 15 L3.2 8.2 L0.5 8.2 Z" fill="#f0c020"/></svg>
<div class="t" style="left:1670px;top:563.69px;font-size:11px;line-height:11px;color:#fff;"><span style="display:inline-block;transform:scaleX(0.929);transform-origin:left">MISC Current (SVI3 TFN)</span></div>
<div class="t" style="left:2205px;width:80px;text-align:right;top:563.69px;font-size:11px;line-height:11px;color:#fff;">3.589 A</div>
<div class="t" style="left:2287px;width:80px;text-align:right;top:563.69px;font-size:11px;line-height:11px;color:#fff;">3.502 A</div>
<div class="t" style="left:2369px;width:80px;text-align:right;top:563.69px;font-size:11px;line-height:11px;color:#fff;">3.593 A</div>
<div class="t" style="left:2451px;width:80px;text-align:right;top:563.69px;font-size:11px;line-height:11px;color:#fff;">3.584 A</div>
<div class="r" style="left:2210px;top:577px;width:1px;height:17px;background:#161616;"></div>
<div class="r" style="left:2292px;top:577px;width:1px;height:17px;background:#161616;"></div>
<div class="r" style="left:2374px;top:577px;width:1px;height:17px;background:#161616;"></div>
<div class="r" style="left:2456px;top:577px;width:1px;height:17px;background:#161616;"></div>
<div class="r" style="left:1653px;top:593px;width:17px;height:1px;background:#1a1a1a;"></div>
<svg style="position:absolute;left:1657px;top:578px;" width="9" height="15" viewBox="0 0 9 15"><path d="M5.5 0 L8.5 0 L5.8 5.5 L8.8 5.5 L1 15 L3.2 8.2 L0.5 8.2 Z" fill="#f0c020"/></svg>
<div class="t" style="left:1670px;top:580.69px;font-size:11px;line-height:11px;color:#fff;"><span style="display:inline-block;transform:scaleX(0.964);transform-origin:left">CPU Package Power</span></div>
<div class="t" style="left:2205px;width:80px;text-align:right;top:580.69px;font-size:11px;line-height:11px;color:#fff;">94.889 W</div>
<div class="t" style="left:2287px;width:80px;text-align:right;top:580.69px;font-size:11px;line-height:11px;color:#fff;">27.537 W</div>
<div class="t" style="left:2369px;width:80px;text-align:right;top:580.69px;font-size:11px;line-height:11px;color:#fff;">98.434 W</div>
<div class="t" style="left:2451px;width:80px;text-align:right;top:580.69px;font-size:11px;line-height:11px;color:#fff;">93.760 W</div>
<div class="r" style="left:1685px;top:594px;width:854px;height:17px;background:#181818;"></div>
<div class="r" style="left:1669px;top:594px;width:16px;height:17px;background:#0e0e0e;"></div>
<div class="r" style="left:2210px;top:594px;width:1px;height:17px;background:#101010;"></div>
<div class="r" style="left:2292px;top:594px;width:1px;height:17px;background:#101010;"></div>
<div class="r" style="left:2374px;top:594px;width:1px;height:17px;background:#101010;"></div>
<div class="r" style="left:2456px;top:594px;width:1px;height:17px;background:#101010;"></div>
<div class="r" style="left:1669px;top:610px;width:17px;height:1px;background:#1a1a1a;"></div>
<svg style="position:absolute;left:1655px;top:596px;" width="8" height="13" viewBox="0 0 8 13"><path d="M0.8 0.5 L6.6 6.5 L0.8 12.5" fill="none" stroke="#d0d0d0" stroke-width="1"/></svg>
<svg style="position:absolute;left:1673px;top:595px;" width="9" height="15" viewBox="0 0 9 15"><path d="M5.5 0 L8.5 0 L5.8 5.5 L8.8 5.5 L1 15 L3.2 8.2 L0.5 8.2 Z" fill="#f0c020"/></svg>
<div class="t" style="left:1686px;top:597.69px;font-size:11px;line-height:11px;color:#fff;"><span style="display:inline-block;transform:scaleX(0.985);transform-origin:left">Core Powers</span></div>
<div class="t" style="left:2205px;width:80px;text-align:right;top:597.69px;font-size:11px;line-height:11px;color:#fff;">12.902 W</div>
<div class="t" style="left:2287px;width:80px;text-align:right;top:597.69px;font-size:11px;line-height:11px;color:#fff;">0.639 W</div>
<div class="t" style="left:2369px;width:80px;text-align:right;top:597.69px;font-size:11px;line-height:11px;color:#fff;">14.311 W</div>
<div class="t" style="left:2451px;width:80px;text-align:right;top:597.69px;font-size:11px;line-height:11px;color:#fff;">12.724 W</div>
<div class="r" style="left:2210px;top:611px;width:1px;height:17px;background:#161616;"></div>
<div class="r" style="left:2292px;top:611px;width:1px;height:17px;background:#161616;"></div>
<div class="r" style="left:2374px;top:611px;width:1px;height:17px;background:#161616;"></div>
<div class="r" style="left:2456px;top:611px;width:1px;height:17px;background:#161616;"></div>
<div class="r" style="left:1653px;top:627px;width:17px;height:1px;background:#1a1a1a;"></div>
<svg style="position:absolute;left:1657px;top:612px;" width="9" height="15" viewBox="0 0 9 15"><path d="M5.5 0 L8.5 0 L5.8 5.5 L8.8 5.5 L1 15 L3.2 8.2 L0.5 8.2 Z" fill="#f0c020"/></svg>
<div class="t" style="left:1670px;top:614.69px;font-size:11px;line-height:11px;color:#fff;"><span style="display:inline-block;transform:scaleX(0.936);transform-origin:left">CPU Core Power (SVI3 TFN)</span></div>
<div class="t" style="left:2205px;width:80px;text-align:right;top:614.69px;font-size:11px;line-height:11px;color:#fff;">64.715 W</div>
<div class="t" style="left:2287px;width:80px;text-align:right;top:614.69px;font-size:11px;line-height:11px;color:#fff;">3.152 W</div>
<div class="t" style="left:2369px;width:80px;text-align:right;top:614.69px;font-size:11px;line-height:11px;color:#fff;">68.459 W</div>
<div class="t" style="left:2451px;width:80px;text-align:right;top:614.69px;font-size:11px;line-height:11px;color:#fff;">63.722 W</div>
<div class="r" style="left:1669px;top:628px;width:870px;height:17px;background:#181818;"></div>
<div class="r" style="left:1653px;top:628px;width:16px;height:17px;background:#0e0e0e;"></div>
<div class="r" style="left:2210px;top:628px;width:1px;height:17px;background:#101010;"></div>
<div class="r" style="left:2292px;top:628px;width:1px;height:17px;background:#101010;"></div>
<div class="r" style="left:2374px;top:628px;width:1px;height:17px;background:#101010;"></div>
<div class="r" style="left:2456px;top:628px;width:1px;height:17px;background:#101010;"></div>
<div class="r" style="left:1653px;top:644px;width:17px;height:1px;background:#1a1a1a;"></div>
<svg style="position:absolute;left:1657px;top:629px;" width="9" height="15" viewBox="0 0 9 15"><path d="M5.5 0 L8.5 0 L5.8 5.5 L8.8 5.5 L1 15 L3.2 8.2 L0.5 8.2 Z" fill="#f0c020"/></svg>
<div class="t" style="left:1670px;top:631.69px;font-size:11px;line-height:11px;color:#fff;"><span style="display:inline-block;transform:scaleX(0.925);transform-origin:left">CPU SoC Power (SVI3 TFN)</span></div>
<div class="t" style="left:2205px;width:80px;text-align:right;top:631.69px;font-size:11px;line-height:11px;color:#fff;">15.903 W</div>
<div class="t" style="left:2287px;width:80px;text-align:right;top:631.69px;font-size:11px;line-height:11px;color:#fff;">13.357 W</div>
<div class="t" style="left:2369px;width:80px;text-align:right;top:631.69px;font-size:11px;line-height:11px;color:#fff;">16.092 W</div>
<div class="t" style="left:2451px;width:80px;text-align:right;top:631.69px;font-size:11px;line-height:11px;color:#fff;">15.871 W</div>
<div class="r" style="left:2210px;top:645px;width:1px;height:17px;background:#161616;"></div>
<div class="r" style="left:2292px;top:645px;width:1px;height:17px;background:#161616;"></div>
<div class="r" style="left:2374px;top:645px;width:1px;height:17px;background:#161616;"></div>
<div class="r" style="left:2456px;top:645px;width:1px;height:17px;background:#161616;"></div>
<div class="r" style="left:1653px;top:661px;width:17px;height:1px;background:#1a1a1a;"></div>
<svg style="position:absolute;left:1657px;top:646px;" width="9" height="15" viewBox="0 0 9 15"><path d="M5.5 0 L8.5 0 L5.8 5.5 L8.8 5.5 L1 15 L3.2 8.2 L0.5 8.2 Z" fill="#f0c020"/></svg>
<div class="t" style="left:1670px;top:648.69px;font-size:11px;line-height:11px;color:#fff;"><span style="display:inline-block;transform:scaleX(0.931);transform-origin:left">Core+SoC+MISC Power (SVI3 TFN)</span></div>
<div class="t" style="left:2205px;width:80px;text-align:right;top:648.69px;font-size:11px;line-height:11px;color:#fff;">84.531 W</div>
<div class="t" style="left:2287px;width:80px;text-align:right;top:648.69px;font-size:11px;line-height:11px;color:#fff;">20.345 W</div>
<div class="t" style="left:2369px;width:80px;text-align:right;top:648.69px;font-size:11px;line-height:11px;color:#fff;">88.084 W</div>
<div class="t" style="left:2451px;width:80px;text-align:right;top:648.69px;font-size:11px;line-height:11px;color:#fff;">83.500 W</div>
<div class="r" style="left:1669px;top:662px;width:870px;height:17px;background:#181818;"></div>
<div class="r" style="left:1653px;top:662px;width:16px;height:17px;background:#0e0e0e;"></div>
<div class="r" style="left:2210px;top:662px;width:1px;height:17px;background:#101010;"></div>
<div class="r" style="left:2292px;top:662px;width:1px;height:17px;background:#101010;"></div>
<div class="r" style="left:2374px;top:662px;width:1px;height:17px;background:#101010;"></div>
<div class="r" style="left:2456px;top:662px;width:1px;height:17px;background:#101010;"></div>
<div class="r" style="left:1653px;top:678px;width:17px;height:1px;background:#1a1a1a;"></div>
<svg style="position:absolute;left:1657px;top:663px;" width="9" height="15" viewBox="0 0 9 15"><path d="M5.5 0 L8.5 0 L5.8 5.5 L8.8 5.5 L1 15 L3.2 8.2 L0.5 8.2 Z" fill="#f0c020"/></svg>
<div class="t" style="left:1670px;top:665.69px;font-size:11px;line-height:11px;color:#fff;"><span style="display:inline-block;transform:scaleX(0.857);transform-origin:left">CPU PPT</span></div>
<div class="t" style="left:2205px;width:80px;text-align:right;top:665.69px;font-size:11px;line-height:11px;color:#fff;">92.589 W</div>
<div class="t" style="left:2287px;width:80px;text-align:right;top:665.69px;font-size:11px;line-height:11px;color:#fff;">26.889 W</div>
<div class="t" style="left:2369px;width:80px;text-align:right;top:665.69px;font-size:11px;line-height:11px;color:#fff;">96.070 W</div>
<div class="t" style="left:2451px;width:80px;text-align:right;top:665.69px;font-size:11px;line-height:11px;color:#fff;">91.515 W</div>
<div class="r" style="left:2210px;top:679px;width:1px;height:17px;background:#161616;"></div>
<div class="r" style="left:2292px;top:679px;width:1px;height:17px;background:#161616;"></div>
<div class="r" style="left:2374px;top:679px;width:1px;height:17px;background:#161616;"></div>
<div class="r" style="left:2456px;top:679px;width:1px;height:17px;background:#161616;"></div>
<div class="r" style="left:1653px;top:695px;width:17px;height:1px;background:#1a1a1a;"></div>
<svg style="position:absolute;left:1656px;top:681px;" width="12" height="12" viewBox="0 0 12 12"><path d="M9.8 2.6 A5 5 0 1 0 10.6 8.8" fill="none" stroke="#c8c8c8" stroke-width="1.8"/><path d="M5.2 2.8 L5.2 6.6 L8 8" fill="none" stroke="#c8c8c8" stroke-width="1.4"/><circle cx="10" cy="2.6" r="1.3" fill="#e0e0e0"/></svg>
<div class="t" style="left:1670px;top:682.69px;font-size:11px;line-height:11px;color:#fff;"><span style="display:inline-block;transform:scaleX(0.973);transform-origin:left">Infinity Fabric Clock (FCLK)</span></div>
<div class="t" style="left:2205px;width:80px;text-align:right;top:682.69px;font-size:11px;line-height:11px;color:#fff;">2,000.0 MHz</div>
<div class="t" style="left:2287px;width:80px;text-align:right;top:682.69px;font-size:11px;line-height:11px;color:#fff;">2,000.0 MHz</div>
<div class="t" style="left:2369px;width:80px;text-align:right;top:682.69px;font-size:11px;line-height:11px;color:#fff;">2,000.0 MHz</div>
<div class="t" style="left:2451px;width:80px;text-align:right;top:682.69px;font-size:11px;line-height:11px;color:#fff;">2,000.0 MHz</div>
<div class="r" style="left:1669px;top:696px;width:870px;height:17px;background:#181818;"></div>
<div class="r" style="left:1653px;top:696px;width:16px;height:17px;background:#0e0e0e;"></div>
<div class="r" style="left:2210px;top:696px;width:1px;height:17px;background:#101010;"></div>
<div class="r" style="left:2292px;top:696px;width:1px;height:17px;background:#101010;"></div>
<div class="r" style="left:2374px;top:696px;width:1px;height:17px;background:#101010;"></div>
<div class="r" style="left:2456px;top:696px;width:1px;height:17px;background:#101010;"></div>
<div class="r" style="left:1653px;top:712px;width:17px;height:1px;background:#1a1a1a;"></div>
<svg style="position:absolute;left:1656px;top:698px;" width="12" height="12" viewBox="0 0 12 12"><path d="M9.8 2.6 A5 5 0 1 0 10.6 8.8" fill="none" stroke="#c8c8c8" stroke-width="1.8"/><path d="M5.2 2.8 L5.2 6.6 L8 8" fill="none" stroke="#c8c8c8" stroke-width="1.4"/><circle cx="10" cy="2.6" r="1.3" fill="#e0e0e0"/></svg>
<div class="t" style="left:1670px;top:699.69px;font-size:11px;line-height:11px;color:#fff;"><span style="display:inline-block;transform:scaleX(0.976);transform-origin:left">Memory Controller Clock (UCLK)</span></div>
<div class="t" style="left:2205px;width:80px;text-align:right;top:699.69px;font-size:11px;line-height:11px;color:#fff;">3,000.0 MHz</div>
<div class="t" style="left:2287px;width:80px;text-align:right;top:699.69px;font-size:11px;line-height:11px;color:#fff;">3,000.0 MHz</div>
<div class="t" style="left:2369px;width:80px;text-align:right;top:699.69px;font-size:11px;line-height:11px;color:#fff;">3,000.0 MHz</div>
<div class="t" style="left:2451px;width:80px;text-align:right;top:699.69px;font-size:11px;line-height:11px;color:#fff;">3,000.0 MHz</div>
<div class="r" style="left:2210px;top:713px;width:1px;height:17px;background:#161616;"></div>
<div class="r" style="left:2292px;top:713px;width:1px;height:17px;background:#161616;"></div>
<div class="r" style="left:2374px;top:713px;width:1px;height:17px;background:#161616;"></div>
<div class="r" style="left:2456px;top:713px;width:1px;height:17px;background:#161616;"></div>
<div class="r" style="left:1669px;top:729px;width:17px;height:1px;background:#1a1a1a;"></div>
<svg style="position:absolute;left:1655px;top:715px;" width="8" height="13" viewBox="0 0 8 13"><path d="M0.8 0.5 L6.6 6.5 L0.8 12.5" fill="none" stroke="#d0d0d0" stroke-width="1"/></svg>
<svg style="position:absolute;left:1672px;top:715px;" width="12" height="12" viewBox="0 0 12 12"><path d="M9.8 2.6 A5 5 0 1 0 10.6 8.8" fill="none" stroke="#c8c8c8" stroke-width="1.8"/><path d="M5.2 2.8 L5.2 6.6 L8 8" fill="none" stroke="#c8c8c8" stroke-width="1.4"/><circle cx="10" cy="2.6" r="1.3" fill="#e0e0e0"/></svg>
<div class="t" style="left:1686px;top:716.69px;font-size:11px;line-height:11px;color:#fff;"><span style="display:inline-block;transform:scaleX(0.978);transform-origin:left">L3 Clocks</span></div>
<div class="t" style="left:2205px;width:80px;text-align:right;top:716.69px;font-size:11px;line-height:11px;color:#fff;">5,156.6 MHz</div>
<div class="t" style="left:2287px;width:80px;text-align:right;top:716.69px;font-size:11px;line-height:11px;color:#fff;">5,120.5 MHz</div>
<div class="t" style="left:2369px;width:80px;text-align:right;top:716.69px;font-size:11px;line-height:11px;color:#fff;">5,229.1 MHz</div>
<div class="t" style="left:2451px;width:80px;text-align:right;top:716.69px;font-size:11px;line-height:11px;color:#fff;">5,149.6 MHz</div>
<div class="r" style="left:2210px;top:730px;width:1px;height:17px;background:#161616;"></div>
<div class="r" style="left:2292px;top:730px;width:1px;height:17px;background:#161616;"></div>
<div class="r" style="left:2374px;top:730px;width:1px;height:17px;background:#161616;"></div>
<div class="r" style="left:2456px;top:730px;width:1px;height:17px;background:#161616;"></div>
<div class="r" style="left:1653px;top:746px;width:17px;height:1px;background:#1a1a1a;"></div>
<svg style="position:absolute;left:1656px;top:732px;" width="12" height="12" viewBox="0 0 12 12"><path d="M9.8 2.6 A5 5 0 1 0 10.6 8.8" fill="none" stroke="#c8c8c8" stroke-width="1.8"/><path d="M5.2 2.8 L5.2 6.6 L8 8" fill="none" stroke="#c8c8c8" stroke-width="1.4"/><circle cx="10" cy="2.6" r="1.3" fill="#e0e0e0"/></svg>
<div class="t" style="left:1670px;top:733.69px;font-size:11px;line-height:11px;color:#fff;"><span style="display:inline-block;transform:scaleX(0.996);transform-origin:left">Frequency Limit - Global</span></div>
<div class="t" style="left:2205px;width:80px;text-align:right;top:733.69px;font-size:11px;line-height:11px;color:#fff;">5,163.8 MHz</div>
<div class="t" style="left:2287px;width:80px;text-align:right;top:733.69px;font-size:11px;line-height:11px;color:#fff;">5,127.5 MHz</div>
<div class="t" style="left:2369px;width:80px;text-align:right;top:733.69px;font-size:11px;line-height:11px;color:#fff;">5,350.1 MHz</div>
<div class="t" style="left:2451px;width:80px;text-align:right;top:733.69px;font-size:11px;line-height:11px;color:#fff;">5,157.2 MHz</div>
<div class="r" style="left:1669px;top:747px;width:870px;height:17px;background:#181818;"></div>
<div class="r" style="left:1653px;top:747px;width:16px;height:17px;background:#0e0e0e;"></div>
<div class="r" style="left:2210px;top:747px;width:1px;height:17px;background:#101010;"></div>
<div class="r" style="left:2292px;top:747px;width:1px;height:17px;background:#101010;"></div>
<div class="r" style="left:2374px;top:747px;width:1px;height:17px;background:#101010;"></div>
<div class="r" style="left:2456px;top:747px;width:1px;height:17px;background:#101010;"></div>
<div class="r" style="left:1653px;top:763px;width:17px;height:1px;background:#1a1a1a;"></div>
<svg style="position:absolute;left:1656px;top:749px;" width="12" height="12" viewBox="0 0 12 12"><path d="M9.8 2.6 A5 5 0 1 0 10.6 8.8" fill="none" stroke="#c8c8c8" stroke-width="1.8"/><path d="M5.2 2.8 L5.2 6.6 L8 8" fill="none" stroke="#c8c8c8" stroke-width="1.4"/><circle cx="10" cy="2.6" r="1.3" fill="#e0e0e0"/></svg>
<div class="t" style="left:1670px;top:750.69px;font-size:11px;line-height:11px;color:#fff;"><span style="display:inline-block;transform:scaleX(0.918);transform-origin:left">CPU PPT Limit</span></div>
<div class="t" style="left:2205px;width:80px;text-align:right;top:750.69px;font-size:11px;line-height:11px;color:#fff;">9.3 %</div>
<div class="t" style="left:2287px;width:80px;text-align:right;top:750.69px;font-size:11px;line-height:11px;color:#fff;">2.7 %</div>
<div class="t" style="left:2369px;width:80px;text-align:right;top:750.69px;font-size:11px;line-height:11px;color:#fff;">9.6 %</div>
<div class="t" style="left:2451px;width:80px;text-align:right;top:750.69px;font-size:11px;line-height:11px;color:#fff;">9.2 %</div>
<div class="r" style="left:2210px;top:764px;width:1px;height:17px;background:#161616;"></div>
<div class="r" style="left:2292px;top:764px;width:1px;height:17px;background:#161616;"></div>
<div class="r" style="left:2374px;top:764px;width:1px;height:17px;background:#161616;"></div>
<div class="r" style="left:2456px;top:764px;width:1px;height:17px;background:#161616;"></div>
<div class="r" style="left:1653px;top:780px;width:17px;height:1px;background:#1a1a1a;"></div>
<svg style="position:absolute;left:1656px;top:766px;" width="12" height="12" viewBox="0 0 12 12"><path d="M9.8 2.6 A5 5 0 1 0 10.6 8.8" fill="none" stroke="#c8c8c8" stroke-width="1.8"/><path d="M5.2 2.8 L5.2 6.6 L8 8" fill="none" stroke="#c8c8c8" stroke-width="1.4"/><circle cx="10" cy="2.6" r="1.3" fill="#e0e0e0"/></svg>
<div class="t" style="left:1670px;top:767.69px;font-size:11px;line-height:11px;color:#fff;"><span style="display:inline-block;transform:scaleX(0.918);transform-origin:left">CPU TDC Limit</span></div>
<div class="t" style="left:2205px;width:80px;text-align:right;top:767.69px;font-size:11px;line-height:11px;color:#fff;">22.5 %</div>
<div class="t" style="left:2287px;width:80px;text-align:right;top:767.69px;font-size:11px;line-height:11px;color:#fff;">1.2 %</div>
<div class="t" style="left:2369px;width:80px;text-align:right;top:767.69px;font-size:11px;line-height:11px;color:#fff;">23.5 %</div>
<div class="t" style="left:2451px;width:80px;text-align:right;top:767.69px;font-size:11px;line-height:11px;color:#fff;">22.2 %</div>
<div class="r" style="left:1669px;top:781px;width:870px;height:17px;background:#181818;"></div>
<div class="r" style="left:1653px;top:781px;width:16px;height:17px;background:#0e0e0e;"></div>
<div class="r" style="left:2210px;top:781px;width:1px;height:17px;background:#101010;"></div>
<div class="r" style="left:2292px;top:781px;width:1px;height:17px;background:#101010;"></div>
<div class="r" style="left:2374px;top:781px;width:1px;height:17px;background:#101010;"></div>
<div class="r" style="left:2456px;top:781px;width:1px;height:17px;background:#101010;"></div>
<div class="r" style="left:1653px;top:797px;width:17px;height:1px;background:#1a1a1a;"></div>
<svg style="position:absolute;left:1656px;top:783px;" width="12" height="12" viewBox="0 0 12 12"><path d="M9.8 2.6 A5 5 0 1 0 10.6 8.8" fill="none" stroke="#c8c8c8" stroke-width="1.8"/><path d="M5.2 2.8 L5.2 6.6 L8 8" fill="none" stroke="#c8c8c8" stroke-width="1.4"/><circle cx="10" cy="2.6" r="1.3" fill="#e0e0e0"/></svg>
<div class="t" style="left:1670px;top:784.69px;font-size:11px;line-height:11px;color:#fff;"><span style="display:inline-block;transform:scaleX(0.918);transform-origin:left">CPU EDC Limit</span></div>
<div class="t" style="left:2205px;width:80px;text-align:right;top:784.69px;font-size:11px;line-height:11px;color:#fff;">12.2 %</div>
<div class="t" style="left:2287px;width:80px;text-align:right;top:784.69px;font-size:11px;line-height:11px;color:#fff;">2.6 %</div>
<div class="t" style="left:2369px;width:80px;text-align:right;top:784.69px;font-size:11px;line-height:11px;color:#fff;">13.8 %</div>
<div class="t" style="left:2451px;width:80px;text-align:right;top:784.69px;font-size:11px;line-height:11px;color:#fff;">12.1 %</div>
<div class="r" style="left:2210px;top:798px;width:1px;height:17px;background:#161616;"></div>
<div class="r" style="left:2292px;top:798px;width:1px;height:17px;background:#161616;"></div>
<div class="r" style="left:2374px;top:798px;width:1px;height:17px;background:#161616;"></div>
<div class="r" style="left:2456px;top:798px;width:1px;height:17px;background:#161616;"></div>
<div class="r" style="left:1653px;top:814px;width:17px;height:1px;background:#1a1a1a;"></div>
<svg style="position:absolute;left:1656px;top:800px;" width="12" height="12" viewBox="0 0 12 12"><path d="M9.8 2.6 A5 5 0 1 0 10.6 8.8" fill="none" stroke="#c8c8c8" stroke-width="1.8"/><path d="M5.2 2.8 L5.2 6.6 L8 8" fill="none" stroke="#c8c8c8" stroke-width="1.4"/><circle cx="10" cy="2.6" r="1.3" fill="#e0e0e0"/></svg>
<div class="t" style="left:1670px;top:801.69px;font-size:11px;line-height:11px;color:#fff;"><span style="display:inline-block;transform:scaleX(0.904);transform-origin:left">CPU PPT FAST Limit</span></div>
<div class="t" style="left:2205px;width:80px;text-align:right;top:801.69px;font-size:11px;line-height:11px;color:#fff;">9.3 %</div>
<div class="t" style="left:2287px;width:80px;text-align:right;top:801.69px;font-size:11px;line-height:11px;color:#fff;">2.7 %</div>
<div class="t" style="left:2369px;width:80px;text-align:right;top:801.69px;font-size:11px;line-height:11px;color:#fff;">9.6 %</div>
<div class="t" style="left:2451px;width:80px;text-align:right;top:801.69px;font-size:11px;line-height:11px;color:#fff;">9.2 %</div>
<div class="r" style="left:1669px;top:815px;width:870px;height:17px;background:#181818;"></div>
<div class="r" style="left:1653px;top:815px;width:16px;height:17px;background:#0e0e0e;"></div>
<div class="r" style="left:2210px;top:815px;width:1px;height:17px;background:#101010;"></div>
<div class="r" style="left:2292px;top:815px;width:1px;height:17px;background:#101010;"></div>
<div class="r" style="left:2374px;top:815px;width:1px;height:17px;background:#101010;"></div>
<div class="r" style="left:2456px;top:815px;width:1px;height:17px;background:#101010;"></div>
<div class="r" style="left:1653px;top:831px;width:17px;height:1px;background:#1a1a1a;"></div>
<svg style="position:absolute;left:1656px;top:817px;" width="12" height="12" viewBox="0 0 12 12"><path d="M9.8 2.6 A5 5 0 1 0 10.6 8.8" fill="none" stroke="#c8c8c8" stroke-width="1.8"/><path d="M5.2 2.8 L5.2 6.6 L8 8" fill="none" stroke="#c8c8c8" stroke-width="1.4"/><circle cx="10" cy="2.6" r="1.3" fill="#e0e0e0"/></svg>
<div class="t" style="left:1670px;top:818.69px;font-size:11px;line-height:11px;color:#fff;"><span style="display:inline-block;transform:scaleX(0.991);transform-origin:left">Thermal Limit</span></div>
<div class="t" style="left:2205px;width:80px;text-align:right;top:818.69px;font-size:11px;line-height:11px;color:#fff;">87.1 %</div>
<div class="t" style="left:2287px;width:80px;text-align:right;top:818.69px;font-size:11px;line-height:11px;color:#fff;">41.9 %</div>
<div class="t" style="left:2369px;width:80px;text-align:right;top:818.69px;font-size:11px;line-height:11px;color:#fff;">88.9 %</div>
<div class="t" style="left:2451px;width:80px;text-align:right;top:818.69px;font-size:11px;line-height:11px;color:#fff;">86.7 %</div>
<div class="r" style="left:2210px;top:832px;width:1px;height:17px;background:#161616;"></div>
<div class="r" style="left:2292px;top:832px;width:1px;height:17px;background:#161616;"></div>
<div class="r" style="left:2374px;top:832px;width:1px;height:17px;background:#161616;"></div>
<div class="r" style="left:2456px;top:832px;width:1px;height:17px;background:#161616;"></div>
<div class="r" style="left:1653px;top:848px;width:17px;height:1px;background:#1a1a1a;"></div>
<svg style="position:absolute;left:1656px;top:834px;" width="12" height="12" viewBox="0 0 12 12"><path d="M9.8 2.6 A5 5 0 1 0 10.6 8.8" fill="none" stroke="#c8c8c8" stroke-width="1.8"/><path d="M5.2 2.8 L5.2 6.6 L8 8" fill="none" stroke="#c8c8c8" stroke-width="1.4"/><circle cx="10" cy="2.6" r="1.3" fill="#e0e0e0"/></svg>
<div class="t" style="left:1670px;top:835.69px;font-size:11px;line-height:11px;color:#fff;"><span style="display:inline-block;transform:scaleX(0.98);transform-origin:left">Thermal Throttling (HTC)</span></div>
<div class="t" style="left:2205px;width:80px;text-align:right;top:835.69px;font-size:11px;line-height:11px;color:#fff;">No</div>
<div class="t" style="left:2287px;width:80px;text-align:right;top:835.69px;font-size:11px;line-height:11px;color:#fff;">No</div>
<div class="t" style="left:2369px;width:80px;text-align:right;top:835.69px;font-size:11px;line-height:11px;color:#fff;">No</div>
<div class="t" style="left:2451px;width:80px;text-align:right;top:835.69px;font-size:11px;line-height:11px;color:#fff;">0 %</div>
<div class="r" style="left:1669px;top:849px;width:870px;height:17px;background:#181818;"></div>
<div class="r" style="left:1653px;top:849px;width:16px;height:17px;background:#0e0e0e;"></div>
<div class="r" style="left:2210px;top:849px;width:1px;height:17px;background:#101010;"></div>
<div class="r" style="left:2292px;top:849px;width:1px;height:17px;background:#101010;"></div>
<div class="r" style="left:2374px;top:849px;width:1px;height:17px;background:#101010;"></div>
<div class="r" style="left:2456px;top:849px;width:1px;height:17px;background:#101010;"></div>
<div class="r" style="left:1653px;top:865px;width:17px;height:1px;background:#1a1a1a;"></div>
<svg style="position:absolute;left:1656px;top:851px;" width="12" height="12" viewBox="0 0 12 12"><path d="M9.8 2.6 A5 5 0 1 0 10.6 8.8" fill="none" stroke="#c8c8c8" stroke-width="1.8"/><path d="M5.2 2.8 L5.2 6.6 L8 8" fill="none" stroke="#c8c8c8" stroke-width="1.4"/><circle cx="10" cy="2.6" r="1.3" fill="#e0e0e0"/></svg>
<div class="t" style="left:1670px;top:852.69px;font-size:11px;line-height:11px;color:#fff;"><span style="display:inline-block;transform:scaleX(0.949);transform-origin:left">Thermal Throttling (PROCHOT CPU)</span></div>
<div class="t" style="left:2205px;width:80px;text-align:right;top:852.69px;font-size:11px;line-height:11px;color:#fff;">No</div>
<div class="t" style="left:2287px;width:80px;text-align:right;top:852.69px;font-size:11px;line-height:11px;color:#fff;">No</div>
<div class="t" style="left:2369px;width:80px;text-align:right;top:852.69px;font-size:11px;line-height:11px;color:#fff;">No</div>
<div class="t" style="left:2451px;width:80px;text-align:right;top:852.69px;font-size:11px;line-height:11px;color:#fff;">0 %</div>
<div class="r" style="left:2210px;top:866px;width:1px;height:17px;background:#161616;"></div>
<div class="r" style="left:2292px;top:866px;width:1px;height:17px;background:#161616;"></div>
<div class="r" style="left:2374px;top:866px;width:1px;height:17px;background:#161616;"></div>
<div class="r" style="left:2456px;top:866px;width:1px;height:17px;background:#161616;"></div>
<div class="r" style="left:1653px;top:882px;width:17px;height:1px;background:#1a1a1a;"></div>
<svg style="position:absolute;left:1656px;top:868px;" width="12" height="12" viewBox="0 0 12 12"><path d="M9.8 2.6 A5 5 0 1 0 10.6 8.8" fill="none" stroke="#c8c8c8" stroke-width="1.8"/><path d="M5.2 2.8 L5.2 6.6 L8 8" fill="none" stroke="#c8c8c8" stroke-width="1.4"/><circle cx="10" cy="2.6" r="1.3" fill="#e0e0e0"/></svg>
<div class="t" style="left:1670px;top:869.69px;font-size:11px;line-height:11px;color:#fff;"><span style="display:inline-block;transform:scaleX(0.949);transform-origin:left">Thermal Throttling (PROCHOT EXT)</span></div>
<div class="t" style="left:2205px;width:80px;text-align:right;top:869.69px;font-size:11px;line-height:11px;color:#fff;">No</div>
<div class="t" style="left:2287px;width:80px;text-align:right;top:869.69px;font-size:11px;line-height:11px;color:#fff;">No</div>
<div class="t" style="left:2369px;width:80px;text-align:right;top:869.69px;font-size:11px;line-height:11px;color:#fff;">No</div>
<div class="t" style="left:2451px;width:80px;text-align:right;top:869.69px;font-size:11px;line-height:11px;color:#fff;">0 %</div>
<div class="r" style="left:1669px;top:883px;width:870px;height:17px;background:#181818;"></div>
<div class="r" style="left:1653px;top:883px;width:16px;height:17px;background:#0e0e0e;"></div>
<div class="r" style="left:2210px;top:883px;width:1px;height:17px;background:#101010;"></div>
<div class="r" style="left:2292px;top:883px;width:1px;height:17px;background:#101010;"></div>
<div class="r" style="left:2374px;top:883px;width:1px;height:17px;background:#101010;"></div>
<div class="r" style="left:2456px;top:883px;width:1px;height:17px;background:#101010;"></div>
<div class="r" style="left:1653px;top:899px;width:17px;height:1px;background:#1a1a1a;"></div>
<svg style="position:absolute;left:1656px;top:885px;" width="12" height="12" viewBox="0 0 12 12"><path d="M9.8 2.6 A5 5 0 1 0 10.6 8.8" fill="none" stroke="#c8c8c8" stroke-width="1.8"/><path d="M5.2 2.8 L5.2 6.6 L8 8" fill="none" stroke="#c8c8c8" stroke-width="1.4"/><circle cx="10" cy="2.6" r="1.3" fill="#e0e0e0"/></svg>
<div class="t" style="left:1670px;top:886.69px;font-size:11px;line-height:11px;color:#fff;"><span style="display:inline-block;transform:scaleX(0.96);transform-origin:left">DRAM Read Bandwidth</span></div>
<div class="t" style="left:2205px;width:80px;text-align:right;top:886.69px;font-size:11px;line-height:11px;color:#fff;">19.717 GB/s</div>
<div class="t" style="left:2287px;width:80px;text-align:right;top:886.69px;font-size:11px;line-height:11px;color:#fff;">0.855 GB/s</div>
<div class="t" style="left:2369px;width:80px;text-align:right;top:886.69px;font-size:11px;line-height:11px;color:#fff;">20.546 GB/s</div>
<div class="t" style="left:2451px;width:80px;text-align:right;top:886.69px;font-size:11px;line-height:11px;color:#fff;">19.110 GB/s</div>
<div class="r" style="left:2210px;top:900px;width:1px;height:17px;background:#161616;"></div>
<div class="r" style="left:2292px;top:900px;width:1px;height:17px;background:#161616;"></div>
<div class="r" style="left:2374px;top:900px;width:1px;height:17px;background:#161616;"></div>
<div class="r" style="left:2456px;top:900px;width:1px;height:17px;background:#161616;"></div>
<div class="r" style="left:1653px;top:916px;width:17px;height:1px;background:#1a1a1a;"></div>
<svg style="position:absolute;left:1656px;top:902px;" width="12" height="12" viewBox="0 0 12 12"><path d="M9.8 2.6 A5 5 0 1 0 10.6 8.8" fill="none" stroke="#c8c8c8" stroke-width="1.8"/><path d="M5.2 2.8 L5.2 6.6 L8 8" fill="none" stroke="#c8c8c8" stroke-width="1.4"/><circle cx="10" cy="2.6" r="1.3" fill="#e0e0e0"/></svg>
<div class="t" style="left:1670px;top:903.69px;font-size:11px;line-height:11px;color:#fff;"><span style="display:inline-block;transform:scaleX(0.963);transform-origin:left">DRAM Write Bandwidth</span></div>
<div class="t" style="left:2205px;width:80px;text-align:right;top:903.69px;font-size:11px;line-height:11px;color:#fff;">10.425 GB/s</div>
<div class="t" style="left:2287px;width:80px;text-align:right;top:903.69px;font-size:11px;line-height:11px;color:#fff;">0.061 GB/s</div>
<div class="t" style="left:2369px;width:80px;text-align:right;top:903.69px;font-size:11px;line-height:11px;color:#fff;">10.700 GB/s</div>
<div class="t" style="left:2451px;width:80px;text-align:right;top:903.69px;font-size:11px;line-height:11px;color:#fff;">9.943 GB/s</div>
<div class="r" style="left:1669px;top:917px;width:870px;height:17px;background:#181818;"></div>
<div class="r" style="left:1653px;top:917px;width:16px;height:17px;background:#0e0e0e;"></div>
<div class="r" style="left:2210px;top:917px;width:1px;height:17px;background:#101010;"></div>
<div class="r" style="left:2292px;top:917px;width:1px;height:17px;background:#101010;"></div>
<div class="r" style="left:2374px;top:917px;width:1px;height:17px;background:#101010;"></div>
<div class="r" style="left:2456px;top:917px;width:1px;height:17px;background:#101010;"></div>
<div class="r" style="left:1653px;top:933px;width:17px;height:1px;background:#1a1a1a;"></div>
<svg style="position:absolute;left:1656px;top:919px;" width="12" height="12" viewBox="0 0 12 12"><path d="M9.8 2.6 A5 5 0 1 0 10.6 8.8" fill="none" stroke="#c8c8c8" stroke-width="1.8"/><path d="M5.2 2.8 L5.2 6.6 L8 8" fill="none" stroke="#c8c8c8" stroke-width="1.4"/><circle cx="10" cy="2.6" r="1.3" fill="#e0e0e0"/></svg>
<div class="t" style="left:1670px;top:920.69px;font-size:11px;line-height:11px;color:#fff;"><span style="display:inline-block;transform:scaleX(0.99);transform-origin:left">Average Active Core Count</span></div>
<div class="t" style="left:2205px;width:80px;text-align:right;top:920.69px;font-size:11px;line-height:11px;color:#fff;">6.0</div>
<div class="t" style="left:2287px;width:80px;text-align:right;top:920.69px;font-size:11px;line-height:11px;color:#fff;">0.2</div>
<div class="t" style="left:2369px;width:80px;text-align:right;top:920.69px;font-size:11px;line-height:11px;color:#fff;">6.0</div>
<div class="t" style="left:2451px;width:80px;text-align:right;top:920.69px;font-size:11px;line-height:11px;color:#fff;">6.0</div>
<div class="r" style="left:2210px;top:934px;width:1px;height:17px;background:#161616;"></div>
<div class="r" style="left:2292px;top:934px;width:1px;height:17px;background:#161616;"></div>
<div class="r" style="left:2374px;top:934px;width:1px;height:17px;background:#161616;"></div>
<div class="r" style="left:2456px;top:934px;width:1px;height:17px;background:#161616;"></div>
<div class="r" style="left:1669px;top:951px;width:870px;height:17px;background:#242424;"></div>
<div class="r" style="left:1653px;top:951px;width:16px;height:17px;background:#0e0e0e;"></div>
<div class="r" style="left:2210px;top:951px;width:1px;height:17px;background:#101010;"></div>
<div class="r" style="left:2292px;top:951px;width:1px;height:17px;background:#101010;"></div>
<div class="r" style="left:2374px;top:951px;width:1px;height:17px;background:#101010;"></div>
<div class="r" style="left:2456px;top:951px;width:1px;height:17px;background:#101010;"></div>
<div class="r" style="left:1653px;top:967px;width:17px;height:1px;background:#1a1a1a;"></div>
<svg style="position:absolute;left:1636px;top:956px;" width="13" height="8" viewBox="0 0 13 8"><path d="M0.5 0.8 L6.5 6.6 L12.5 0.8" fill="none" stroke="#d0d0d0" stroke-width="1"/></svg>
<svg style="position:absolute;left:1654px;top:952px;" width="14" height="15" viewBox="0 0 14 15"><defs><linearGradient id="cg" x1="0" x2="0" y1="0" y2="1"><stop offset="0" stop-color="#8a8a8a"/><stop offset="1" stop-color="#4a4a4a"/></linearGradient></defs><rect x="2" y="0.5" width="10" height="14" rx="1.5" fill="url(#cg)"/><rect x="0" y="2" width="2" height="1.5" fill="#c8c8c8"/><rect x="12" y="2" width="2" height="1.5" fill="#c8c8c8"/><rect x="0" y="5" width="2" height="1.5" fill="#c8c8c8"/><rect x="12" y="5" width="2" height="1.5" fill="#c8c8c8"/><rect x="0" y="8" width="2" height="1.5" fill="#c8c8c8"/><rect x="12" y="8" width="2" height="1.5" fill="#c8c8c8"/><rect x="0" y="11" width="2" height="1.5" fill="#c8c8c8"/><rect x="12" y="11" width="2" height="1.5" fill="#c8c8c8"/></svg>
<div class="t" style="left:1671px;top:954.69px;font-size:11px;line-height:11px;color:#fff;font-weight:700;letter-spacing:0.4px;">MSI MAG B650 TOMAHAWK WIFI (MS-7D75) (Nuvoton NCT5887D)</div>
<div class="r" style="left:2210px;top:968px;width:1px;height:17px;background:#161616;"></div>
<div class="r" style="left:2292px;top:968px;width:1px;height:17px;background:#161616;"></div>
<div class="r" style="left:2374px;top:968px;width:1px;height:17px;background:#161616;"></div>
<div class="r" style="left:2456px;top:968px;width:1px;height:17px;background:#161616;"></div>
<div class="r" style="left:1653px;top:984px;width:17px;height:1px;background:#1a1a1a;"></div>
<svg style="position:absolute;left:1659px;top:969px;" width="5" height="15" viewBox="0 0 5 15"><rect x="1.6" y="0.5" width="1.8" height="10" rx="0.9" fill="#f0f0f0"/><rect x="1.8" y="4.5" width="1.4" height="7" fill="#d81818"/><circle cx="2.5" cy="12.3" r="1.9" fill="#d81818"/></svg>
<div class="t" style="left:1670px;top:971.69px;font-size:11px;line-height:11px;color:#fff;"><span style="display:inline-block;transform:scaleX(0.893);transform-origin:left">AMD TSI 4</span></div>
<div class="t" style="left:2205px;width:80px;text-align:right;top:971.69px;font-size:11px;line-height:11px;color:#fff;">85.0 °C</div>
<div class="t" style="left:2287px;width:80px;text-align:right;top:971.69px;font-size:11px;line-height:11px;color:#fff;">40.0 °C</div>
<div class="t" style="left:2369px;width:80px;text-align:right;top:971.69px;font-size:11px;line-height:11px;color:#fff;">86.0 °C</div>
<div class="t" style="left:2451px;width:80px;text-align:right;top:971.69px;font-size:11px;line-height:11px;color:#fff;">85.1 °C</div>
<div class="r" style="left:1669px;top:985px;width:870px;height:17px;background:#181818;"></div>
<div class="r" style="left:1653px;top:985px;width:16px;height:17px;background:#0e0e0e;"></div>
<div class="r" style="left:2210px;top:985px;width:1px;height:17px;background:#101010;"></div>
<div class="r" style="left:2292px;top:985px;width:1px;height:17px;background:#101010;"></div>
<div class="r" style="left:2374px;top:985px;width:1px;height:17px;background:#101010;"></div>
<div class="r" style="left:2456px;top:985px;width:1px;height:17px;background:#101010;"></div>
<div class="r" style="left:1653px;top:1001px;width:17px;height:1px;background:#1a1a1a;"></div>
<svg style="position:absolute;left:1659px;top:986px;" width="5" height="15" viewBox="0 0 5 15"><rect x="1.6" y="0.5" width="1.8" height="10" rx="0.9" fill="#f0f0f0"/><rect x="1.8" y="4.5" width="1.4" height="7" fill="#d81818"/><circle cx="2.5" cy="12.3" r="1.9" fill="#d81818"/></svg>
<div class="t" style="left:1670px;top:988.69px;font-size:11px;line-height:11px;color:#fff;"><span style="display:inline-block;transform:scaleX(0.973);transform-origin:left">TD0P current</span></div>
<div class="t" style="left:2205px;width:80px;text-align:right;top:988.69px;font-size:11px;line-height:11px;color:#fff;">36.5 °C</div>
<div class="t" style="left:2287px;width:80px;text-align:right;top:988.69px;font-size:11px;line-height:11px;color:#fff;">35.5 °C</div>
<div class="t" style="left:2369px;width:80px;text-align:right;top:988.69px;font-size:11px;line-height:11px;color:#fff;">37.0 °C</div>
<div class="t" style="left:2451px;width:80px;text-align:right;top:988.69px;font-size:11px;line-height:11px;color:#fff;">36.4 °C</div>
<div class="r" style="left:2210px;top:1002px;width:1px;height:17px;background:#161616;"></div>
<div class="r" style="left:2292px;top:1002px;width:1px;height:17px;background:#161616;"></div>
<div class="r" style="left:2374px;top:1002px;width:1px;height:17px;background:#161616;"></div>
<div class="r" style="left:2456px;top:1002px;width:1px;height:17px;background:#161616;"></div>
<div class="r" style="left:1653px;top:1018px;width:17px;height:1px;background:#1a1a1a;"></div>
<svg style="position:absolute;left:1659px;top:1003px;" width="5" height="15" viewBox="0 0 5 15"><rect x="1.6" y="0.5" width="1.8" height="10" rx="0.9" fill="#f0f0f0"/><rect x="1.8" y="4.5" width="1.4" height="7" fill="#d81818"/><circle cx="2.5" cy="12.3" r="1.9" fill="#d81818"/></svg>
<div class="t" style="left:1670px;top:1005.69px;font-size:11px;line-height:11px;color:#fff;"><span style="display:inline-block;transform:scaleX(0.957);transform-origin:left">T15</span></div>
<div class="t" style="left:2205px;width:80px;text-align:right;top:1005.69px;font-size:11px;line-height:11px;color:#fff;">42.5 °C</div>
<div class="t" style="left:2287px;width:80px;text-align:right;top:1005.69px;font-size:11px;line-height:11px;color:#fff;">36.5 °C</div>
<div class="t" style="left:2369px;width:80px;text-align:right;top:1005.69px;font-size:11px;line-height:11px;color:#fff;">42.5 °C</div>
<div class="t" style="left:2451px;width:80px;text-align:right;top:1005.69px;font-size:11px;line-height:11px;color:#fff;">41.4 °C</div>
<div class="r" style="left:1669px;top:1019px;width:870px;height:17px;background:#181818;"></div>
<div class="r" style="left:1653px;top:1019px;width:16px;height:17px;background:#0e0e0e;"></div>
<div class="r" style="left:2210px;top:1019px;width:1px;height:17px;background:#101010;"></div>
<div class="r" style="left:2292px;top:1019px;width:1px;height:17px;background:#101010;"></div>
<div class="r" style="left:2374px;top:1019px;width:1px;height:17px;background:#101010;"></div>
<div class="r" style="left:2456px;top:1019px;width:1px;height:17px;background:#101010;"></div>
<div class="r" style="left:1653px;top:1035px;width:17px;height:1px;background:#1a1a1a;"></div>
<svg style="position:absolute;left:1659px;top:1020px;" width="5" height="15" viewBox="0 0 5 15"><rect x="1.6" y="0.5" width="1.8" height="10" rx="0.9" fill="#f0f0f0"/><rect x="1.8" y="4.5" width="1.4" height="7" fill="#d81818"/><circle cx="2.5" cy="12.3" r="1.9" fill="#d81818"/></svg>
<div class="t" style="left:1670px;top:1022.69px;font-size:11px;line-height:11px;color:#fff;"><span style="display:inline-block;transform:scaleX(0.925);transform-origin:left">T1</span></div>
<div class="t" style="left:2205px;width:80px;text-align:right;top:1022.69px;font-size:11px;line-height:11px;color:#fff;">35.0 °C</div>
<div class="t" style="left:2287px;width:80px;text-align:right;top:1022.69px;font-size:11px;line-height:11px;color:#fff;">34.0 °C</div>
<div class="t" style="left:2369px;width:80px;text-align:right;top:1022.69px;font-size:11px;line-height:11px;color:#fff;">35.0 °C</div>
<div class="t" style="left:2451px;width:80px;text-align:right;top:1022.69px;font-size:11px;line-height:11px;color:#fff;">34.6 °C</div>
<div class="r" style="left:2210px;top:1036px;width:1px;height:17px;background:#161616;"></div>
<div class="r" style="left:2292px;top:1036px;width:1px;height:17px;background:#161616;"></div>
<div class="r" style="left:2374px;top:1036px;width:1px;height:17px;background:#161616;"></div>
<div class="r" style="left:2456px;top:1036px;width:1px;height:17px;background:#161616;"></div>
<div class="r" style="left:1653px;top:1052px;width:17px;height:1px;background:#1a1a1a;"></div>
<svg style="position:absolute;left:1659px;top:1037px;" width="5" height="15" viewBox="0 0 5 15"><rect x="1.6" y="0.5" width="1.8" height="10" rx="0.9" fill="#f0f0f0"/><rect x="1.8" y="4.5" width="1.4" height="7" fill="#d81818"/><circle cx="2.5" cy="12.3" r="1.9" fill="#d81818"/></svg>
<div class="t" style="left:1670px;top:1039.69px;font-size:11px;line-height:11px;color:#fff;"><span style="display:inline-block;transform:scaleX(0.83);transform-origin:left">VR</span></div>
<div class="t" style="left:2205px;width:80px;text-align:right;top:1039.69px;font-size:11px;line-height:11px;color:#fff;">41.0 °C</div>
<div class="t" style="left:2287px;width:80px;text-align:right;top:1039.69px;font-size:11px;line-height:11px;color:#fff;">32.5 °C</div>
<div class="t" style="left:2369px;width:80px;text-align:right;top:1039.69px;font-size:11px;line-height:11px;color:#fff;">41.0 °C</div>
<div class="t" style="left:2451px;width:80px;text-align:right;top:1039.69px;font-size:11px;line-height:11px;color:#fff;">39.9 °C</div>
<div class="r" style="left:1669px;top:1053px;width:870px;height:17px;background:#181818;"></div>
<div class="r" style="left:1653px;top:1053px;width:16px;height:17px;background:#0e0e0e;"></div>
<div class="r" style="left:2210px;top:1053px;width:1px;height:17px;background:#101010;"></div>
<div class="r" style="left:2292px;top:1053px;width:1px;height:17px;background:#101010;"></div>
<div class="r" style="left:2374px;top:1053px;width:1px;height:17px;background:#101010;"></div>
<div class="r" style="left:2456px;top:1053px;width:1px;height:17px;background:#101010;"></div>
<div class="r" style="left:1653px;top:1069px;width:17px;height:1px;background:#1a1a1a;"></div>
<svg style="position:absolute;left:1659px;top:1054px;" width="5" height="15" viewBox="0 0 5 15"><rect x="1.6" y="0.5" width="1.8" height="10" rx="0.9" fill="#f0f0f0"/><rect x="1.8" y="4.5" width="1.4" height="7" fill="#d81818"/><circle cx="2.5" cy="12.3" r="1.9" fill="#d81818"/></svg>
<div class="t" style="left:1670px;top:1056.69px;font-size:11px;line-height:11px;color:#fff;"><span style="display:inline-block;transform:scaleX(0.925);transform-origin:left">T0</span></div>
<div class="t" style="left:2205px;width:80px;text-align:right;top:1056.69px;font-size:11px;line-height:11px;color:#fff;">85.5 °C</div>
<div class="t" style="left:2287px;width:80px;text-align:right;top:1056.69px;font-size:11px;line-height:11px;color:#fff;">82.0 °C</div>
<div class="t" style="left:2369px;width:80px;text-align:right;top:1056.69px;font-size:11px;line-height:11px;color:#fff;">86.5 °C</div>
<div class="t" style="left:2451px;width:80px;text-align:right;top:1056.69px;font-size:11px;line-height:11px;color:#fff;">84.9 °C</div>
<div class="r" style="left:2210px;top:1070px;width:1px;height:17px;background:#161616;"></div>
<div class="r" style="left:2292px;top:1070px;width:1px;height:17px;background:#161616;"></div>
<div class="r" style="left:2374px;top:1070px;width:1px;height:17px;background:#161616;"></div>
<div class="r" style="left:2456px;top:1070px;width:1px;height:17px;background:#161616;"></div>
<div class="r" style="left:1653px;top:1086px;width:17px;height:1px;background:#1a1a1a;"></div>
<svg style="position:absolute;left:1659px;top:1071px;" width="5" height="15" viewBox="0 0 5 15"><rect x="1.6" y="0.5" width="1.8" height="10" rx="0.9" fill="#f0f0f0"/><rect x="1.8" y="4.5" width="1.4" height="7" fill="#d81818"/><circle cx="2.5" cy="12.3" r="1.9" fill="#d81818"/></svg>
<div class="t" style="left:1670px;top:1073.69px;font-size:11px;line-height:11px;color:#fff;"><span style="display:inline-block;transform:scaleX(0.957);transform-origin:left">T15</span></div>
<div class="t" style="left:2205px;width:80px;text-align:right;top:1073.69px;font-size:11px;line-height:11px;color:#fff;">42.5 °C</div>
<div class="t" style="left:2287px;width:80px;text-align:right;top:1073.69px;font-size:11px;line-height:11px;color:#fff;">36.5 °C</div>
<div class="t" style="left:2369px;width:80px;text-align:right;top:1073.69px;font-size:11px;line-height:11px;color:#fff;">42.5 °C</div>
<div class="t" style="left:2451px;width:80px;text-align:right;top:1073.69px;font-size:11px;line-height:11px;color:#fff;">41.4 °C</div>
<div class="r" style="left:1669px;top:1087px;width:870px;height:17px;background:#181818;"></div>
<div class="r" style="left:1653px;top:1087px;width:16px;height:17px;background:#0e0e0e;"></div>
<div class="r" style="left:2210px;top:1087px;width:1px;height:17px;background:#101010;"></div>
<div class="r" style="left:2292px;top:1087px;width:1px;height:17px;background:#101010;"></div>
<div class="r" style="left:2374px;top:1087px;width:1px;height:17px;background:#101010;"></div>
<div class="r" style="left:2456px;top:1087px;width:1px;height:17px;background:#101010;"></div>
<div class="r" style="left:1653px;top:1103px;width:17px;height:1px;background:#1a1a1a;"></div>
<svg style="position:absolute;left:1657px;top:1088px;" width="9" height="15" viewBox="0 0 9 15"><path d="M5.5 0 L8.5 0 L5.8 5.5 L8.8 5.5 L1 15 L3.2 8.2 L0.5 8.2 Z" fill="#f0c020"/></svg>
<div class="t" style="left:1670px;top:1090.69px;font-size:11px;line-height:11px;color:#fff;"><span style="display:inline-block;transform:scaleX(0.877);transform-origin:left">VIN0</span></div>
<div class="t" style="left:2205px;width:80px;text-align:right;top:1090.69px;font-size:11px;line-height:11px;color:#fff;">1.000 V</div>
<div class="t" style="left:2287px;width:80px;text-align:right;top:1090.69px;font-size:11px;line-height:11px;color:#fff;">1.000 V</div>
<div class="t" style="left:2369px;width:80px;text-align:right;top:1090.69px;font-size:11px;line-height:11px;color:#fff;">1.002 V</div>
<div class="t" style="left:2451px;width:80px;text-align:right;top:1090.69px;font-size:11px;line-height:11px;color:#fff;">1.000 V</div>
<div class="r" style="left:2210px;top:1104px;width:1px;height:17px;background:#161616;"></div>
<div class="r" style="left:2292px;top:1104px;width:1px;height:17px;background:#161616;"></div>
<div class="r" style="left:2374px;top:1104px;width:1px;height:17px;background:#161616;"></div>
<div class="r" style="left:2456px;top:1104px;width:1px;height:17px;background:#161616;"></div>
<div class="r" style="left:1653px;top:1120px;width:17px;height:1px;background:#1a1a1a;"></div>
<svg style="position:absolute;left:1657px;top:1105px;" width="9" height="15" viewBox="0 0 9 15"><path d="M5.5 0 L8.5 0 L5.8 5.5 L8.8 5.5 L1 15 L3.2 8.2 L0.5 8.2 Z" fill="#f0c020"/></svg>
<div class="t" style="left:1670px;top:1107.69px;font-size:11px;line-height:11px;color:#fff;"><span style="display:inline-block;transform:scaleX(0.877);transform-origin:left">VIN1</span></div>
<div class="t" style="left:2205px;width:80px;text-align:right;top:1107.69px;font-size:11px;line-height:11px;color:#fff;">1.008 V</div>
<div class="t" style="left:2287px;width:80px;text-align:right;top:1107.69px;font-size:11px;line-height:11px;color:#fff;">1.006 V</div>
<div class="t" style="left:2369px;width:80px;text-align:right;top:1107.69px;font-size:11px;line-height:11px;color:#fff;">1.008 V</div>
<div class="t" style="left:2451px;width:80px;text-align:right;top:1107.69px;font-size:11px;line-height:11px;color:#fff;">1.008 V</div>
<div class="r" style="left:1669px;top:1121px;width:870px;height:17px;background:#181818;"></div>
<div class="r" style="left:1653px;top:1121px;width:16px;height:17px;background:#0e0e0e;"></div>
<div class="r" style="left:2210px;top:1121px;width:1px;height:17px;background:#101010;"></div>
<div class="r" style="left:2292px;top:1121px;width:1px;height:17px;background:#101010;"></div>
<div class="r" style="left:2374px;top:1121px;width:1px;height:17px;background:#101010;"></div>
<div class="r" style="left:2456px;top:1121px;width:1px;height:17px;background:#101010;"></div>
<div class="r" style="left:1653px;top:1137px;width:17px;height:1px;background:#1a1a1a;"></div>
<svg style="position:absolute;left:1657px;top:1122px;" width="9" height="15" viewBox="0 0 9 15"><path d="M5.5 0 L8.5 0 L5.8 5.5 L8.8 5.5 L1 15 L3.2 8.2 L0.5 8.2 Z" fill="#f0c020"/></svg>
<div class="t" style="left:1670px;top:1124.69px;font-size:11px;line-height:11px;color:#fff;"><span style="display:inline-block;transform:scaleX(0.877);transform-origin:left">VIN2</span></div>
<div class="t" style="left:2205px;width:80px;text-align:right;top:1124.69px;font-size:11px;line-height:11px;color:#fff;">1.310 V</div>
<div class="t" style="left:2287px;width:80px;text-align:right;top:1124.69px;font-size:11px;line-height:11px;color:#fff;">1.304 V</div>
<div class="t" style="left:2369px;width:80px;text-align:right;top:1124.69px;font-size:11px;line-height:11px;color:#fff;">1.312 V</div>
<div class="t" style="left:2451px;width:80px;text-align:right;top:1124.69px;font-size:11px;line-height:11px;color:#fff;">1.310 V</div>
<div class="r" style="left:2210px;top:1138px;width:1px;height:17px;background:#161616;"></div>
<div class="r" style="left:2292px;top:1138px;width:1px;height:17px;background:#161616;"></div>
<div class="r" style="left:2374px;top:1138px;width:1px;height:17px;background:#161616;"></div>
<div class="r" style="left:2456px;top:1138px;width:1px;height:17px;background:#161616;"></div>
<div class="r" style="left:1653px;top:1154px;width:17px;height:1px;background:#1a1a1a;"></div>
<svg style="position:absolute;left:1657px;top:1139px;" width="9" height="15" viewBox="0 0 9 15"><path d="M5.5 0 L8.5 0 L5.8 5.5 L8.8 5.5 L1 15 L3.2 8.2 L0.5 8.2 Z" fill="#f0c020"/></svg>
<div class="t" style="left:1670px;top:1141.69px;font-size:11px;line-height:11px;color:#fff;"><span style="display:inline-block;transform:scaleX(0.877);transform-origin:left">VIN3</span></div>
<div class="t" style="left:2205px;width:80px;text-align:right;top:1141.69px;font-size:11px;line-height:11px;color:#fff;">0.674 V</div>
<div class="t" style="left:2287px;width:80px;text-align:right;top:1141.69px;font-size:11px;line-height:11px;color:#fff;">0.672 V</div>
<div class="t" style="left:2369px;width:80px;text-align:right;top:1141.69px;font-size:11px;line-height:11px;color:#fff;">0.674 V</div>
<div class="t" style="left:2451px;width:80px;text-align:right;top:1141.69px;font-size:11px;line-height:11px;color:#fff;">0.673 V</div>
<div class="r" style="left:1669px;top:1155px;width:870px;height:17px;background:#181818;"></div>
<div class="r" style="left:1653px;top:1155px;width:16px;height:17px;background:#0e0e0e;"></div>
<div class="r" style="left:2210px;top:1155px;width:1px;height:17px;background:#101010;"></div>
<div class="r" style="left:2292px;top:1155px;width:1px;height:17px;background:#101010;"></div>
<div class="r" style="left:2374px;top:1155px;width:1px;height:17px;background:#101010;"></div>
<div class="r" style="left:2456px;top:1155px;width:1px;height:17px;background:#101010;"></div>
<div class="r" style="left:1653px;top:1171px;width:17px;height:1px;background:#1a1a1a;"></div>
<svg style="position:absolute;left:1657px;top:1156px;" width="9" height="15" viewBox="0 0 9 15"><path d="M5.5 0 L8.5 0 L5.8 5.5 L8.8 5.5 L1 15 L3.2 8.2 L0.5 8.2 Z" fill="#f0c020"/></svg>
<div class="t" style="left:1670px;top:1158.69px;font-size:11px;line-height:11px;color:#fff;"><span style="display:inline-block;transform:scaleX(0.877);transform-origin:left">VIN4</span></div>
<div class="t" style="left:2205px;width:80px;text-align:right;top:1158.69px;font-size:11px;line-height:11px;color:#fff;">1.262 V</div>
<div class="t" style="left:2287px;width:80px;text-align:right;top:1158.69px;font-size:11px;line-height:11px;color:#fff;">1.174 V</div>
<div class="t" style="left:2369px;width:80px;text-align:right;top:1158.69px;font-size:11px;line-height:11px;color:#fff;">1.304 V</div>
<div class="t" style="left:2451px;width:80px;text-align:right;top:1158.69px;font-size:11px;line-height:11px;color:#fff;">1.258 V</div>
<div class="r" style="left:2210px;top:1172px;width:1px;height:17px;background:#161616;"></div>
<div class="r" style="left:2292px;top:1172px;width:1px;height:17px;background:#161616;"></div>
<div class="r" style="left:2374px;top:1172px;width:1px;height:17px;background:#161616;"></div>
<div class="r" style="left:2456px;top:1172px;width:1px;height:17px;background:#161616;"></div>
<div class="r" style="left:1653px;top:1188px;width:17px;height:1px;background:#1a1a1a;"></div>
<svg style="position:absolute;left:1657px;top:1173px;" width="9" height="15" viewBox="0 0 9 15"><path d="M5.5 0 L8.5 0 L5.8 5.5 L8.8 5.5 L1 15 L3.2 8.2 L0.5 8.2 Z" fill="#f0c020"/></svg>
<div class="t" style="left:1670px;top:1175.69px;font-size:11px;line-height:11px;color:#fff;"><span style="display:inline-block;transform:scaleX(0.877);transform-origin:left">VIN5</span></div>
<div class="t" style="left:2205px;width:80px;text-align:right;top:1175.69px;font-size:11px;line-height:11px;color:#fff;">0.236 V</div>
<div class="t" style="left:2287px;width:80px;text-align:right;top:1175.69px;font-size:11px;line-height:11px;color:#fff;">0.224 V</div>
<div class="t" style="left:2369px;width:80px;text-align:right;top:1175.69px;font-size:11px;line-height:11px;color:#fff;">0.242 V</div>
<div class="t" style="left:2451px;width:80px;text-align:right;top:1175.69px;font-size:11px;line-height:11px;color:#fff;">0.235 V</div>
<div class="r" style="left:1669px;top:1189px;width:870px;height:17px;background:#181818;"></div>
<div class="r" style="left:1653px;top:1189px;width:16px;height:17px;background:#0e0e0e;"></div>
<div class="r" style="left:2210px;top:1189px;width:1px;height:17px;background:#101010;"></div>
<div class="r" style="left:2292px;top:1189px;width:1px;height:17px;background:#101010;"></div>
<div class="r" style="left:2374px;top:1189px;width:1px;height:17px;background:#101010;"></div>
<div class="r" style="left:2456px;top:1189px;width:1px;height:17px;background:#101010;"></div>
<div class="r" style="left:1653px;top:1205px;width:17px;height:1px;background:#1a1a1a;"></div>
<svg style="position:absolute;left:1657px;top:1190px;" width="9" height="15" viewBox="0 0 9 15"><path d="M5.5 0 L8.5 0 L5.8 5.5 L8.8 5.5 L1 15 L3.2 8.2 L0.5 8.2 Z" fill="#f0c020"/></svg>
<div class="t" style="left:1670px;top:1192.69px;font-size:11px;line-height:11px;color:#fff;"><span style="display:inline-block;transform:scaleX(0.877);transform-origin:left">VIN6</span></div>
<div class="t" style="left:2205px;width:80px;text-align:right;top:1192.69px;font-size:11px;line-height:11px;color:#fff;">0.842 V</div>
<div class="t" style="left:2287px;width:80px;text-align:right;top:1192.69px;font-size:11px;line-height:11px;color:#fff;">0.840 V</div>
<div class="t" style="left:2369px;width:80px;text-align:right;top:1192.69px;font-size:11px;line-height:11px;color:#fff;">0.854 V</div>
<div class="t" style="left:2451px;width:80px;text-align:right;top:1192.69px;font-size:11px;line-height:11px;color:#fff;">0.847 V</div>
<div class="r" style="left:2210px;top:1206px;width:1px;height:17px;background:#161616;"></div>
<div class="r" style="left:2292px;top:1206px;width:1px;height:17px;background:#161616;"></div>
<div class="r" style="left:2374px;top:1206px;width:1px;height:17px;background:#161616;"></div>
<div class="r" style="left:2456px;top:1206px;width:1px;height:17px;background:#161616;"></div>
<div class="r" style="left:1653px;top:1222px;width:17px;height:1px;background:#1a1a1a;"></div>
<svg style="position:absolute;left:1657px;top:1207px;" width="9" height="15" viewBox="0 0 9 15"><path d="M5.5 0 L8.5 0 L5.8 5.5 L8.8 5.5 L1 15 L3.2 8.2 L0.5 8.2 Z" fill="#f0c020"/></svg>
<div class="t" style="left:1670px;top:1209.69px;font-size:11px;line-height:11px;color:#fff;"><span style="display:inline-block;transform:scaleX(0.877);transform-origin:left">VIN7</span></div>
<div class="t" style="left:2205px;width:80px;text-align:right;top:1209.69px;font-size:11px;line-height:11px;color:#fff;">1.532 V</div>
<div class="t" style="left:2287px;width:80px;text-align:right;top:1209.69px;font-size:11px;line-height:11px;color:#fff;">1.530 V</div>
<div class="t" style="left:2369px;width:80px;text-align:right;top:1209.69px;font-size:11px;line-height:11px;color:#fff;">1.536 V</div>
<div class="t" style="left:2451px;width:80px;text-align:right;top:1209.69px;font-size:11px;line-height:11px;color:#fff;">1.532 V</div>
<div class="r" style="left:1669px;top:1223px;width:870px;height:17px;background:#181818;"></div>
<div class="r" style="left:1653px;top:1223px;width:16px;height:17px;background:#0e0e0e;"></div>
<div class="r" style="left:2210px;top:1223px;width:1px;height:17px;background:#101010;"></div>
<div class="r" style="left:2292px;top:1223px;width:1px;height:17px;background:#101010;"></div>
<div class="r" style="left:2374px;top:1223px;width:1px;height:17px;background:#101010;"></div>
<div class="r" style="left:2456px;top:1223px;width:1px;height:17px;background:#101010;"></div>
<div class="r" style="left:1653px;top:1239px;width:17px;height:1px;background:#1a1a1a;"></div>
<svg style="position:absolute;left:1657px;top:1224px;" width="9" height="15" viewBox="0 0 9 15"><path d="M5.5 0 L8.5 0 L5.8 5.5 L8.8 5.5 L1 15 L3.2 8.2 L0.5 8.2 Z" fill="#f0c020"/></svg>
<div class="t" style="left:1670px;top:1226.69px;font-size:11px;line-height:11px;color:#fff;"><span style="display:inline-block;transform:scaleX(0.877);transform-origin:left">3VCC</span></div>
<div class="t" style="left:2205px;width:80px;text-align:right;top:1226.69px;font-size:11px;line-height:11px;color:#fff;">3.364 V</div>
<div class="t" style="left:2287px;width:80px;text-align:right;top:1226.69px;font-size:11px;line-height:11px;color:#fff;">3.356 V</div>
<div class="t" style="left:2369px;width:80px;text-align:right;top:1226.69px;font-size:11px;line-height:11px;color:#fff;">3.368 V</div>
<div class="t" style="left:2451px;width:80px;text-align:right;top:1226.69px;font-size:11px;line-height:11px;color:#fff;">3.363 V</div>
<div class="r" style="left:2210px;top:1240px;width:1px;height:17px;background:#161616;"></div>
<div class="r" style="left:2292px;top:1240px;width:1px;height:17px;background:#161616;"></div>
<div class="r" style="left:2374px;top:1240px;width:1px;height:17px;background:#161616;"></div>
<div class="r" style="left:2456px;top:1240px;width:1px;height:17px;background:#161616;"></div>
<div class="r" style="left:1653px;top:1256px;width:17px;height:1px;background:#1a1a1a;"></div>
<svg style="position:absolute;left:1655px;top:1242px;" width="14" height="14" viewBox="0 0 14 14"><g transform="rotate(0 7 7)"><path d="M7 7 C5.5 4.5 4.5 2.5 5.5 1 C6.5 -0.2 9.5 0.2 9.8 1.8 C10 3.5 8.5 5.5 7 7 Z" fill="#dcdcdc"/></g><g transform="rotate(90 7 7)"><path d="M7 7 C5.5 4.5 4.5 2.5 5.5 1 C6.5 -0.2 9.5 0.2 9.8 1.8 C10 3.5 8.5 5.5 7 7 Z" fill="#dcdcdc"/></g><g transform="rotate(180 7 7)"><path d="M7 7 C5.5 4.5 4.5 2.5 5.5 1 C6.5 -0.2 9.5 0.2 9.8 1.8 C10 3.5 8.5 5.5 7 7 Z" fill="#dcdcdc"/></g><g transform="rotate(270 7 7)"><path d="M7 7 C5.5 4.5 4.5 2.5 5.5 1 C6.5 -0.2 9.5 0.2 9.8 1.8 C10 3.5 8.5 5.5 7 7 Z" fill="#dcdcdc"/></g><circle cx="7" cy="7" r="1.5" fill="#bbb"/></svg>
<div class="t" style="left:1670px;top:1243.69px;font-size:11px;line-height:11px;color:#fff;"><span style="display:inline-block;transform:scaleX(0.973);transform-origin:left">Fan0</span></div>
<div class="t" style="left:2205px;width:80px;text-align:right;top:1243.69px;font-size:11px;line-height:11px;color:#fff;">1,554 RPM</div>
<div class="t" style="left:2287px;width:80px;text-align:right;top:1243.69px;font-size:11px;line-height:11px;color:#fff;">1,538 RPM</div>
<div class="t" style="left:2369px;width:80px;text-align:right;top:1243.69px;font-size:11px;line-height:11px;color:#fff;">1,564 RPM</div>
<div class="t" style="left:2451px;width:80px;text-align:right;top:1243.69px;font-size:11px;line-height:11px;color:#fff;">1,552 RPM</div>
<div class="r" style="left:1669px;top:1257px;width:870px;height:17px;background:#181818;"></div>
<div class="r" style="left:1653px;top:1257px;width:16px;height:17px;background:#0e0e0e;"></div>
<div class="r" style="left:2210px;top:1257px;width:1px;height:17px;background:#101010;"></div>
<div class="r" style="left:2292px;top:1257px;width:1px;height:17px;background:#101010;"></div>
<div class="r" style="left:2374px;top:1257px;width:1px;height:17px;background:#101010;"></div>
<div class="r" style="left:2456px;top:1257px;width:1px;height:17px;background:#101010;"></div>
<div class="r" style="left:1653px;top:1273px;width:17px;height:1px;background:#1a1a1a;"></div>
<svg style="position:absolute;left:1655px;top:1259px;" width="14" height="14" viewBox="0 0 14 14"><g transform="rotate(0 7 7)"><path d="M7 7 C5.5 4.5 4.5 2.5 5.5 1 C6.5 -0.2 9.5 0.2 9.8 1.8 C10 3.5 8.5 5.5 7 7 Z" fill="#dcdcdc"/></g><g transform="rotate(90 7 7)"><path d="M7 7 C5.5 4.5 4.5 2.5 5.5 1 C6.5 -0.2 9.5 0.2 9.8 1.8 C10 3.5 8.5 5.5 7 7 Z" fill="#dcdcdc"/></g><g transform="rotate(180 7 7)"><path d="M7 7 C5.5 4.5 4.5 2.5 5.5 1 C6.5 -0.2 9.5 0.2 9.8 1.8 C10 3.5 8.5 5.5 7 7 Z" fill="#dcdcdc"/></g><g transform="rotate(270 7 7)"><path d="M7 7 C5.5 4.5 4.5 2.5 5.5 1 C6.5 -0.2 9.5 0.2 9.8 1.8 C10 3.5 8.5 5.5 7 7 Z" fill="#dcdcdc"/></g><circle cx="7" cy="7" r="1.5" fill="#bbb"/></svg>
<div class="t" style="left:1670px;top:1260.69px;font-size:11px;line-height:11px;color:#fff;"><span style="display:inline-block;transform:scaleX(0.973);transform-origin:left">Fan2</span></div>
<div class="t" style="left:2205px;width:80px;text-align:right;top:1260.69px;font-size:11px;line-height:11px;color:#fff;">1,176 RPM</div>
<div class="t" style="left:2287px;width:80px;text-align:right;top:1260.69px;font-size:11px;line-height:11px;color:#fff;">1,161 RPM</div>
<div class="t" style="left:2369px;width:80px;text-align:right;top:1260.69px;font-size:11px;line-height:11px;color:#fff;">1,182 RPM</div>
<div class="t" style="left:2451px;width:80px;text-align:right;top:1260.69px;font-size:11px;line-height:11px;color:#fff;">1,170 RPM</div>
<div class="r" style="left:2210px;top:1274px;width:1px;height:17px;background:#161616;"></div>
<div class="r" style="left:2292px;top:1274px;width:1px;height:17px;background:#161616;"></div>
<div class="r" style="left:2374px;top:1274px;width:1px;height:17px;background:#161616;"></div>
<div class="r" style="left:2456px;top:1274px;width:1px;height:17px;background:#161616;"></div>
<div class="r" style="left:1669px;top:1291px;width:870px;height:17px;background:#242424;"></div>
<div class="r" style="left:1653px;top:1291px;width:16px;height:17px;background:#0e0e0e;"></div>
<div class="r" style="left:2210px;top:1291px;width:1px;height:17px;background:#101010;"></div>
<div class="r" style="left:2292px;top:1291px;width:1px;height:17px;background:#101010;"></div>
<div class="r" style="left:2374px;top:1291px;width:1px;height:17px;background:#101010;"></div>
<div class="r" style="left:2456px;top:1291px;width:1px;height:17px;background:#101010;"></div>
<div class="r" style="left:1653px;top:1307px;width:17px;height:1px;background:#1a1a1a;"></div>
<svg style="position:absolute;left:1636px;top:1296px;" width="13" height="8" viewBox="0 0 13 8"><path d="M0.5 0.8 L6.5 6.6 L12.5 0.8" fill="none" stroke="#d0d0d0" stroke-width="1"/></svg>
<svg style="position:absolute;left:1654px;top:1292px;" width="14" height="15" viewBox="0 0 14 15"><defs><linearGradient id="cg" x1="0" x2="0" y1="0" y2="1"><stop offset="0" stop-color="#8a8a8a"/><stop offset="1" stop-color="#4a4a4a"/></linearGradient></defs><rect x="2" y="0.5" width="10" height="14" rx="1.5" fill="url(#cg)"/><rect x="0" y="2" width="2" height="1.5" fill="#c8c8c8"/><rect x="12" y="2" width="2" height="1.5" fill="#c8c8c8"/><rect x="0" y="5" width="2" height="1.5" fill="#c8c8c8"/><rect x="12" y="5" width="2" height="1.5" fill="#c8c8c8"/><rect x="0" y="8" width="2" height="1.5" fill="#c8c8c8"/><rect x="12" y="8" width="2" height="1.5" fill="#c8c8c8"/><rect x="0" y="11" width="2" height="1.5" fill="#c8c8c8"/><rect x="12" y="11" width="2" height="1.5" fill="#c8c8c8"/></svg>
<div class="t" style="left:1671px;top:1294.69px;font-size:11px;line-height:11px;color:#fff;font-weight:700;letter-spacing:0.4px;">MSI MAG B650 TOMAHAWK WIFI (MS-7D75) (AMD Chipset)</div>
<div class="r" style="left:2210px;top:1308px;width:1px;height:17px;background:#161616;"></div>
<div class="r" style="left:2292px;top:1308px;width:1px;height:17px;background:#161616;"></div>
<div class="r" style="left:2374px;top:1308px;width:1px;height:17px;background:#161616;"></div>
<div class="r" style="left:2456px;top:1308px;width:1px;height:17px;background:#161616;"></div>
<div class="r" style="left:1653px;top:1324px;width:17px;height:1px;background:#1a1a1a;"></div>
<svg style="position:absolute;left:1659px;top:1309px;" width="5" height="15" viewBox="0 0 5 15"><rect x="1.6" y="0.5" width="1.8" height="10" rx="0.9" fill="#f0f0f0"/><rect x="1.8" y="4.5" width="1.4" height="7" fill="#d81818"/><circle cx="2.5" cy="12.3" r="1.9" fill="#d81818"/></svg>
<div class="t" style="left:1670px;top:1311.69px;font-size:11px;line-height:11px;color:#fff;"><span style="display:inline-block;transform:scaleX(0.973);transform-origin:left">Chipset 1 (xHCI)</span></div>
<div class="t" style="left:2205px;width:80px;text-align:right;top:1311.69px;font-size:11px;line-height:11px;color:#fff;">40.1 °C</div>
<div class="t" style="left:2287px;width:80px;text-align:right;top:1311.69px;font-size:11px;line-height:11px;color:#fff;">39.2 °C</div>
<div class="t" style="left:2369px;width:80px;text-align:right;top:1311.69px;font-size:11px;line-height:11px;color:#fff;">40.1 °C</div>
<div class="t" style="left:2451px;width:80px;text-align:right;top:1311.69px;font-size:11px;line-height:11px;color:#fff;">40.1 °C</div>
<div class="r" style="left:1669px;top:1325px;width:870px;height:10px;background:#181818;"></div>
<div class="r" style="left:1653px;top:1325px;width:16px;height:10px;background:#0e0e0e;"></div>
<div class="r" style="left:2210px;top:1325px;width:1px;height:10px;background:#101010;"></div>
<div class="r" style="left:2292px;top:1325px;width:1px;height:10px;background:#101010;"></div>
<div class="r" style="left:2374px;top:1325px;width:1px;height:10px;background:#101010;"></div>
<div class="r" style="left:2456px;top:1325px;width:1px;height:10px;background:#101010;"></div>
<div class="r" style="left:1669px;top:729px;width:870px;height:1px;background:#1e1e1e;"></div>
<div class="r" style="left:1629px;top:1335px;width:928px;height:1px;background:#3a3a3a;"></div>
<div class="r" style="left:1629px;top:1336px;width:928px;height:55px;background:#000;border-bottom-left-radius:7px;"></div>
<div class="r" style="left:1629px;top:1343px;width:42px;height:35px;border:1px solid #9c9c9c;box-sizing:border-box;border-radius:4px;background:linear-gradient(#3a3a3a,#0a0a0a 60%);"></div>
<svg style="position:absolute;left:1629px;top:1343px;" width="42" height="35" viewBox="0 0 42 35"><path d="M4 17 L12 9 L12 14 L19 14 L19 20 L12 20 L12 25 Z" fill="#3aa0e8" stroke="#cde" stroke-width="0.6"/><path d="M38 17 L30 9 L30 14 L23 14 L23 20 L30 20 L30 25 Z" fill="#3aa0e8" stroke="#cde" stroke-width="0.6"/></svg>
<div class="r" style="left:1673px;top:1343px;width:42px;height:35px;border:1px solid #505050;box-sizing:border-box;border-radius:4px;background:linear-gradient(#3a3a3a,#0a0a0a 60%);"></div>
<svg style="position:absolute;left:1673px;top:1343px;" width="42" height="35" viewBox="0 0 42 35"><path d="M21 17 L13 9 L13 14 L5 14 L5 20 L13 20 L13 25 Z" fill="#2a78b8"/><path d="M21 17 L29 9 L29 14 L37 14 L37 20 L29 20 L29 25 Z" fill="#2a78b8"/></svg>
<div class="r" style="left:2238px;top:1343px;width:42px;height:35px;border:1px solid #6e6e6e;box-sizing:border-box;border-radius:4px;background:linear-gradient(#3a3a3a,#0a0a0a 60%);"></div>
<svg style="position:absolute;left:2238px;top:1343px;" width="42" height="35" viewBox="0 0 42 35"><rect x="6" y="4" width="14" height="11" fill="#3a9ae8"/><ellipse cx="13" cy="18" rx="5" ry="1.5" fill="#bbb"/><rect x="22" y="14" width="14" height="11" fill="#3a9ae8"/><ellipse cx="29" cy="29" rx="5" ry="1.5" fill="#bbb"/><path d="M20 9 H31 V14" fill="none" stroke="#888"/></svg>
<div class="t" style="left:2305px;width:60px;text-align:right;top:1355.27px;font-size:11.5px;line-height:11.5px;color:#fff;">0:10:04</div>
<div class="r" style="left:2367px;top:1343px;width:42px;height:35px;border:1px solid #6e6e6e;box-sizing:border-box;border-radius:4px;background:linear-gradient(#3a3a3a,#0a0a0a 60%);"></div>
<svg style="position:absolute;left:2367px;top:1343px;" width="42" height="35" viewBox="0 0 42 35"><circle cx="21" cy="17.5" r="15" fill="#f4f4f4"/><rect x="20.2" y="3.5" width="1.6" height="3" fill="#222" transform="rotate(0 21 17.5)"/><rect x="20.2" y="3.5" width="1.6" height="3" fill="#222" transform="rotate(30 21 17.5)"/><rect x="20.2" y="3.5" width="1.6" height="3" fill="#222" transform="rotate(60 21 17.5)"/><rect x="20.2" y="3.5" width="1.6" height="3" fill="#222" transform="rotate(90 21 17.5)"/><rect x="20.2" y="3.5" width="1.6" height="3" fill="#222" transform="rotate(120 21 17.5)"/><rect x="20.2" y="3.5" width="1.6" height="3" fill="#222" transform="rotate(150 21 17.5)"/><rect x="20.2" y="3.5" width="1.6" height="3" fill="#222" transform="rotate(180 21 17.5)"/><rect x="20.2" y="3.5" width="1.6" height="3" fill="#222" transform="rotate(210 21 17.5)"/><rect x="20.2" y="3.5" width="1.6" height="3" fill="#222" transform="rotate(240 21 17.5)"/><rect x="20.2" y="3.5" width="1.6" height="3" fill="#222" transform="rotate(270 21 17.5)"/><rect x="20.2" y="3.5" width="1.6" height="3" fill="#222" transform="rotate(300 21 17.5)"/><rect x="20.2" y="3.5" width="1.6" height="3" fill="#222" transform="rotate(330 21 17.5)"/><path d="M21 6 V17.5 H29" fill="none" stroke="#111" stroke-width="2"/></svg>
<div class="r" style="left:2412px;top:1343px;width:42px;height:35px;border:1px solid #6e6e6e;box-sizing:border-box;border-radius:4px;background:linear-gradient(#3a3a3a,#0a0a0a 60%);"></div>
<svg style="position:absolute;left:2412px;top:1343px;" width="42" height="35" viewBox="0 0 42 35"><path d="M10 3 H27 L33 9 V32 H10 Z" fill="#f0f0f0"/><g stroke="#c8c8c8" stroke-width="0.8"><path d="M13 11 H30"/><path d="M13 14 H30"/><path d="M13 17 H30"/><path d="M13 20 H30"/><path d="M13 23 H30"/><path d="M13 26 H30"/><path d="M13 29 H30"/></g><path d="M27 21 H31 V25 H35 V29 H31 V33 H27 V29 H23 V25 H27 Z" fill="#8ac848"/></svg>
<div class="r" style="left:2459px;top:1343px;width:42px;height:35px;border:1px solid #6e6e6e;box-sizing:border-box;border-radius:4px;background:linear-gradient(#3a3a3a,#0a0a0a 60%);"></div>
<svg style="position:absolute;left:2459px;top:1343px;" width="42" height="35" viewBox="0 0 42 35"><g fill="#c8c8c8"><circle cx="21" cy="17.5" r="11"/><rect x="18" y="1.5" width="6" height="6" transform="rotate(0 21 17.5)"/><rect x="18" y="1.5" width="6" height="6" transform="rotate(45 21 17.5)"/><rect x="18" y="1.5" width="6" height="6" transform="rotate(90 21 17.5)"/><rect x="18" y="1.5" width="6" height="6" transform="rotate(135 21 17.5)"/><rect x="18" y="1.5" width="6" height="6" transform="rotate(180 21 17.5)"/><rect x="18" y="1.5" width="6" height="6" transform="rotate(225 21 17.5)"/><rect x="18" y="1.5" width="6" height="6" transform="rotate(270 21 17.5)"/><rect x="18" y="1.5" width="6" height="6" transform="rotate(315 21 17.5)"/></g><circle cx="21" cy="17.5" r="5.5" fill="#2a2a2a"/></svg>
<div class="r" style="left:2505px;top:1343px;width:42px;height:35px;border:1px solid #6e6e6e;box-sizing:border-box;border-radius:4px;background:linear-gradient(#3a3a3a,#0a0a0a 60%);"></div>
<svg style="position:absolute;left:2505px;top:1343px;" width="42" height="35" viewBox="0 0 42 35"><path d="M10 7 L32 28 M32 7 L10 28" stroke="#3aa0e8" stroke-width="6"/></svg>
<div class="r" style="left:0px;top:1392px;width:2559px;height:47px;background:#202020;"></div>
<div class="r" style="left:0px;top:1392px;width:2559px;height:1px;background:#383838;"></div>
<svg style="position:absolute;left:1181px;top:1404px;" width="24" height="24" viewBox="0 0 24 24"><defs><linearGradient id="wl" x1="0" y1="0" x2="1" y2="1"><stop offset="0" stop-color="#6ad8ff"/><stop offset="1" stop-color="#1a98f0"/></linearGradient></defs><g fill="url(#wl)"><rect x="0" y="0" width="11.4" height="11.4" rx="1"/><rect x="12.6" y="0" width="11.4" height="11.4" rx="1"/><rect x="0" y="12.6" width="11.4" height="11.4" rx="1"/><rect x="12.6" y="12.6" width="11.4" height="11.4" rx="1"/></g></svg>
<svg style="position:absolute;left:1225px;top:1404px;" width="24" height="24" viewBox="0 0 24 24"><circle cx="12" cy="12" r="12" fill="#28a745"/><path d="M12 12 L1.6 6 A12 12 0 0 1 22.4 6 Z" fill="#ea4335"/><path d="M12 12 L22.4 6 A12 12 0 0 1 12 24 Z" fill="#fbbc04"/><circle cx="12" cy="12" r="5.4" fill="#fff"/><circle cx="12" cy="12" r="4.3" fill="#4285f4"/></svg>
<svg style="position:absolute;left:1269px;top:1404px;" width="25" height="23" viewBox="0 0 25 23"><path d="M0 2 Q0 0 2 0 H8 L10 2 H23 Q25 2 25 4 V21 Q25 23 23 23 H2 Q0 23 0 21 Z" fill="#f0b818"/><rect x="0" y="4" width="25" height="19" rx="1.5" fill="#ffd45a"/><rect x="5" y="16" width="15" height="7" rx="1.5" fill="#1a7ad0"/></svg>
<svg style="position:absolute;left:1313px;top:1404px;" width="24" height="24" viewBox="0 0 24 24"><rect x="0" y="0" width="24" height="14" rx="3" fill="#2288c8"/><rect x="5" y="2" width="3" height="10" fill="#e8f8ff"/><rect x="11" y="6" width="3" height="6" fill="#e8f8ff"/><rect x="17" y="9" width="3" height="3" fill="#e8f8ff"/><rect x="0" y="14" width="24" height="10" fill="#1a1a1a"/><rect x="5" y="15" width="3" height="8" rx="1.2" fill="#f4f4f4"/><rect x="10.5" y="15" width="3" height="8" rx="1.2" fill="#f4f4f4"/><rect x="16" y="15" width="3" height="8" rx="1.2" fill="#f4f4f4"/></svg>
<svg style="position:absolute;left:1357px;top:1404px;" width="24" height="24" viewBox="0 0 24 24"><rect x="0" y="0" width="24" height="24" fill="#c80808"/><text x="12" y="19" font-size="17" font-weight="700" text-anchor="middle" fill="#fff" font-family="Liberation Sans" letter-spacing="-1">64</text></svg>
<div class="r" style="left:1322px;top:1432px;width:6px;height:3px;background:#a0a0a0;border-radius:2px;"></div>
<div class="r" style="left:1366px;top:1432px;width:6px;height:3px;background:#a0a0a0;border-radius:2px;"></div>
<svg style="position:absolute;left:2397px;top:1412px;" width="11" height="7" viewBox="0 0 11 7"><path d="M0.8 6 L5.5 1 L10.2 6" fill="none" stroke="#fff" stroke-width="1.2"/></svg>
<svg style="position:absolute;left:2427px;top:1409px;" width="17" height="16" viewBox="0 0 17 16"><path d="M0.5 2.5 H10 M0.5 2.5 V11.5 H11 M4 15 H10 M7 11.5 V15" fill="none" stroke="#fff" stroke-width="1"/><rect x="11.5" y="0.5" width="4" height="6" fill="none" stroke="#fff"/><path d="M13.5 6.5 V15" stroke="#fff"/></svg>
<svg style="position:absolute;left:2450px;top:1408px;" width="18" height="16" viewBox="0 0 18 16"><path d="M0.6 5.2 H3.6 L8 1.6 V14.4 L3.6 10.8 H0.6 Z" fill="none" stroke="#fff" stroke-width="1.1"/><path d="M10.2 6 Q11.2 8 10.2 10 M12.4 4 Q14.6 8 12.4 12 M14.6 2 Q18 8 14.6 14" fill="none" stroke="#fff" stroke-width="1.1" stroke-linecap="round"/></svg>
<div class="t" style="left:2460px;width:80px;text-align:right;top:1401.84px;font-size:12px;line-height:12px;color:#fff;"><span style="display:inline-block;transform:scaleX(0.95);transform-origin:right">16:53:03</span></div>
<div class="t" style="left:2460px;width:80px;text-align:right;top:1417.84px;font-size:12px;line-height:12px;color:#fff;"><span style="display:inline-block;transform:scaleX(0.961);transform-origin:right">15.09.2025</span></div>
</body></html>
